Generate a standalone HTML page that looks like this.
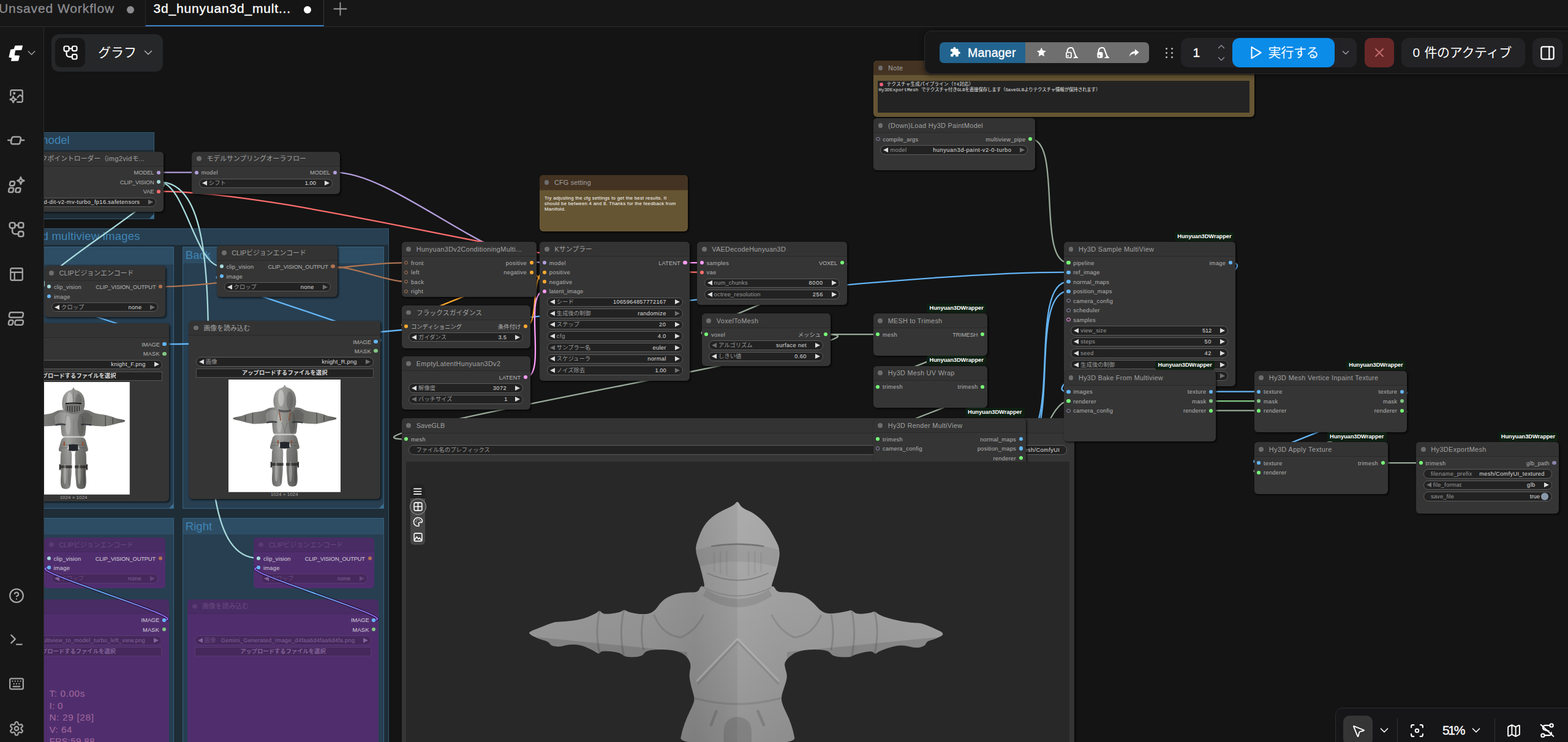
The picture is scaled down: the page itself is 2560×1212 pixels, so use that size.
<!DOCTYPE html><html lang="ja"><head><meta charset="utf-8"><title>ComfyUI - 3d_hunyuan3d_multiview</title><style>
html,body{margin:0;padding:0}
body{width:2560px;height:1212px;overflow:hidden;background:#141414;font-family:"Liberation Sans","Noto Sans CJK JP",sans-serif;position:relative}
.j{font-family:"Liberation Sans","Noto Sans CJK JP",sans-serif;white-space:nowrap}
.a{position:absolute}
.tb{-webkit-text-stroke:.35px currentColor}
.n{position:absolute;background:#353535;border-radius:6px;box-shadow:1.5px 1.5px 3px rgba(0,0,0,.6)}
.t{position:absolute;left:0;top:0;right:0;height:23.25px;background:#333;border-radius:6px 6px 0 0;box-shadow:0 1px 0 rgba(0,0,0,.24)}
.td{position:absolute;left:7.85px;top:7.85px;width:7.8px;height:7.8px;border-radius:50%;background:#6e6e6e}
.tt{position:absolute;left:24.25px;top:4.75px;height:14px;line-height:14px;font-size:10.85px;color:#a2a2a2;white-space:nowrap}
.d{position:absolute;width:6.2px;height:6.2px;margin:-3.1px;border-radius:50%}
.rg{box-sizing:border-box;border:1.7px solid;background:none!important}
.l{position:absolute;font-size:9.3px;line-height:12px;height:12px;color:#b4b4b4;white-space:nowrap}
.w{position:absolute;height:15.5px;border-radius:8px;background:#222;border:1px solid #5c5c5c;box-sizing:border-box}
.w .l{top:.75px}
.wl{left:15px;color:#9a9a9a}
.wv{right:26px;color:#dedede}
.al,.ar{position:absolute;top:2.75px;width:0;height:0;border-top:4px solid transparent;border-bottom:4px solid transparent}
.al{left:4px;border-right:8px solid #ddd}
.ar{right:4px;border-left:8px solid #ddd}
.dm.al{border-right-color:#707070}
.dm.ar{border-left-color:#707070}
.bt{position:absolute;height:15px;background:#222;border:1px solid #555;box-sizing:border-box;text-align:center;font-size:9.3px;line-height:13px;color:#dcdcdc;white-space:nowrap;font-weight:bold}
.bd{position:absolute;height:15px;line-height:15px;padding:0 4.25px;background:#0e2012;border-radius:3px;color:#fff;font-size:9.3px;font-weight:bold;white-space:nowrap}
.g{position:absolute;box-sizing:border-box;background:rgba(63,120,158,.25);border:1px solid rgba(63,120,158,.6)}
.gt{position:absolute;left:0;top:0;right:0;background:rgba(63,120,158,.25)}
.gl{position:absolute;left:3.75px;font-size:18.6px;line-height:22px;height:22px;color:#3f84b4;white-space:nowrap}
.gc{position:absolute;right:0;bottom:0;width:0;height:0;border-left:7.75px solid transparent;border-bottom:7.75px solid rgba(63,120,158,.85)}
.p{background:#502e6e;box-shadow:none}
.p .t{background:#492c64;box-shadow:0 1px 0 rgba(0,0,0,.12)}
.p .td{background:#5c3b73}
.p .tt{color:#6a4a80}
.p .l{color:#d6d0da}
.p .w{background:#46285c;border-color:#5a3a70}
.p .wl{color:#6b4a82}
.p .wv{color:#83639a}
.p .al{border-right-color:#83639a}
.p .ar{border-left-color:#83639a}
.p .dm.al{border-right-color:#64457b}
.p .dm.ar{border-left-color:#64457b}
.p .bt{background:#46285c;border-color:#573869;color:#83639a}
</style></head><body><svg width="0" height="0" style="position:absolute"><defs><linearGradient id="kg" gradientUnits="userSpaceOnUse" x1="0" y1="0" x2="1000" y2="0"><stop offset="0" stop-color="#5c5c5a"/><stop offset=".2" stop-color="#838380"/><stop offset=".36" stop-color="#6f6f6d"/><stop offset=".45" stop-color="#a2a29f"/><stop offset=".6" stop-color="#6e6e6b"/><stop offset=".8" stop-color="#83837f"/><stop offset="1" stop-color="#525250"/></linearGradient><linearGradient id="kv" gradientUnits="userSpaceOnUse" x1="0" y1="0" x2="0" y2="1000"><stop offset="0" stop-color="#fff" stop-opacity=".12"/><stop offset=".5" stop-color="#000" stop-opacity="0"/><stop offset="1" stop-color="#000" stop-opacity=".22"/></linearGradient></defs></svg><div class="g" style="left:-60px;top:216.25px;width:311.75px;height:141.75px"><div class="gt" style="height:27.5px"></div><i class="gc"></i></div><span class="gl a" style="left:0;top:218.2px;width:113.75px;text-align:right">Load model</span><div class="g" style="left:-60px;top:372.5px;width:694.9px;height:900px"><div class="gt" style="height:26.5px"></div></div><span class="gl a" style="left:0;top:374.5px;width:228.75px;text-align:right"><span style="letter-spacing:.17px">Load multiview images</span></span><div class="g" style="left:-60px;top:403px;width:344.25px;height:427.5px"><div class="gt" style="height:27.5px"></div><i class="gc"></i></div><div class="g" style="left:298px;top:403px;width:328.75px;height:427.5px"><div class="gt" style="height:25.75px"></div><span class="gl" style="top:2px">Back</span><i class="gc"></i></div><div class="g" style="left:-60px;top:846.25px;width:344.25px;height:420px"><div class="gt" style="height:26px"></div></div><div class="g" style="left:298px;top:846.25px;width:328.75px;height:420px"><div class="gt" style="height:26px"></div><span class="gl" style="top:2px">Right</span></div><svg class="a" style="left:0;top:0" width="2560" height="1212" fill="none" stroke-linecap="round"><path d="M259.25 281.6C274.69 281.6 305.56 281.6 321 281.6" stroke="#B39DDB" stroke-width="2.3"/><path d="M546.75 281.6C639.92 281.6 795.83 429.1 889 429.1" stroke="#B39DDB" stroke-width="2.3"/><path d="M259.25 312.6C483.32 312.6 921.68 444.6 1145.75 444.6" stroke="#FF6E6E" stroke-width="2.3"/><path d="M259.25 297.1C302.28 297.1 318.72 435.35 361.75 435.35" stroke="#A8DADC" stroke-width="2.3"/><path d="M259.25 297.1C321.18 297.1 18.32 468.35 80.25 468.35" stroke="#A8DADC" stroke-width="2.3"/><path d="M259.25 297.1C418.24 297.1 263.16 911.85 422.15 911.85" stroke="#A8DADC" stroke-width="2.3"/><path d="M262.25 468.35C362.98 468.35 562.52 429.1 663.25 429.1" stroke="#AD7452" stroke-width="2.3"/><path d="M543.5 435.35C574.07 435.35 632.68 460.1 663.25 460.1" stroke="#AD7452" stroke-width="2.3"/><path d="M268.5 562.1C319.47 562.1 29.28 483.85 80.25 483.85" stroke="#64B5F6" stroke-width="2.3"/><path d="M268.5 562.1C638.67 562.1 1374.33 444.6 1744.5 444.6" stroke="#64B5F6" stroke-width="2.3"/><path d="M613.5 557.85C681.89 557.85 293.36 450.85 361.75 450.85" stroke="#64B5F6" stroke-width="2.3"/><path d="M867.75 429.1C925.08 429.1 605.92 532.85 663.25 532.85" stroke="#FFA931" stroke-width="2.3"/><path d="M858 532.85C881.38 532.85 865.62 444.6 889 444.6" stroke="#FFA931" stroke-width="2.3"/><path d="M867.75 444.6C874.33 444.6 882.42 460.1 889 460.1" stroke="#FFA931" stroke-width="2.3"/><path d="M858 616.1C893.97 616.1 853.03 475.6 889 475.6" stroke="#FF9CF9" stroke-width="2.3"/><path d="M1118.5 429.1C1125.31 429.1 1138.94 429.1 1145.75 429.1" stroke="#FF9CF9" stroke-width="2.3"/><path d="M1374.75 429.1C1437.38 429.1 1090.62 546.1 1153.25 546.1" stroke="#99AA99" stroke-width="2.3"/><path d="M1347.75 546.1C1369.12 546.1 1411.88 546.1 1433.25 546.1" stroke="#99AA99" stroke-width="2.3"/><path d="M1347.75 546.1C1524.15 546.1 486.85 717.35 663.25 717.35" stroke="#99AA99" stroke-width="2.3"/><path d="M1604.25 546.1C1652.05 546.1 1385.45 631.6 1433.25 631.6" stroke="#99AA99" stroke-width="2.3"/><path d="M1604.25 631.6C1652.03 631.6 1385.47 717 1433.25 717" stroke="#99AA99" stroke-width="2.3"/><path d="M1682.25 227.1C1735.09 227.1 1691.66 429.1 1744.5 429.1" stroke="#99AA99" stroke-width="2.3"/><path d="M1666.75 717C1733.85 717 1677.4 460.1 1744.5 460.1" stroke="#64B5F6" stroke-width="2.3"/><path d="M1666.75 732.5C1733.85 732.5 1677.4 475.6 1744.5 475.6" stroke="#64B5F6" stroke-width="2.3"/><path d="M1666.75 748C1697.04 748 1714.21 655.1 1744.5 655.1" stroke="#99AA99" stroke-width="2.3"/><path d="M2009 429.1C2093.51 429.1 1659.99 639.6 1744.5 639.6" stroke="#64B5F6" stroke-width="2.3"/><path d="M1977.25 639.6C1996.75 639.6 2035.75 639.6 2055.25 639.6" stroke="#64B5F6" stroke-width="2.3"/><path d="M1977.25 655.1C1996.75 655.1 2035.75 655.1 2055.25 655.1" stroke="#81C784" stroke-width="2.3"/><path d="M1977.25 670.6C1996.75 670.6 2035.75 670.6 2055.25 670.6" stroke="#99AA99" stroke-width="2.3"/><path d="M2289 639.6C2354.29 639.6 1989.96 756.1 2055.25 756.1" stroke="#64B5F6" stroke-width="2.3"/><path d="M2289 670.6C2352.66 670.6 1991.59 771.6 2055.25 771.6" stroke="#99AA99" stroke-width="2.3"/><path d="M2257.75 756.1C2273.28 756.1 2304.32 756.1 2319.85 756.1" stroke="#99AA99" stroke-width="2.3"/></svg><div class="n p" style="left:72px;top:877.75px;width:197.5px;height:82.85px"><div class="t"><i class="td"></i><span class="tt"><span style="letter-spacing:-0.05px">CLIP</span><span class="j">ビジョンエンコード</span></span></div><i class="d" style="left:7.75px;top:34.1px;background:#A8DADC"></i><span class="l" style="left:15.5px;top:28.8px"><span style="letter-spacing:0.17px">clip_vision</span></span><i class="d" style="left:7.75px;top:49.6px;background:#64B5F6"></i><span class="l" style="left:15.5px;top:44.3px"><span style="letter-spacing:0.28px">image</span></span><i class="d" style="right:7.75px;top:34.1px;background:#AD7452"></i><span class="l" style="right:15.5px;top:28.8px"><span style="letter-spacing:-0.14px">CLIP_VISION_OUTPUT</span></span><div class="w" style="left:11.6px;top:59.5px;width:174.3px"><i class="al"></i><i class="ar dm"></i><span class="l wl"><span class="j">クロップ</span></span><span class="l wv"><span style="letter-spacing:0.32px">none</span></span></div></div><div class="n p" style="left:414.4px;top:877.75px;width:197px;height:82.85px"><div class="t"><i class="td"></i><span class="tt"><span style="letter-spacing:-0.05px">CLIP</span><span class="j">ビジョンエンコード</span></span></div><i class="d" style="left:7.75px;top:34.1px;background:#A8DADC"></i><span class="l" style="left:15.5px;top:28.8px"><span style="letter-spacing:0.17px">clip_vision</span></span><i class="d" style="left:7.75px;top:49.6px;background:#64B5F6"></i><span class="l" style="left:15.5px;top:44.3px"><span style="letter-spacing:0.28px">image</span></span><i class="d" style="right:7.75px;top:34.1px;background:#AD7452"></i><span class="l" style="right:15.5px;top:28.8px"><span style="letter-spacing:-0.14px">CLIP_VISION_OUTPUT</span></span><div class="w" style="left:11.6px;top:59.5px;width:173.8px"><i class="al"></i><i class="ar dm"></i><span class="l wl"><span class="j">クロップ</span></span><span class="l wv"><span style="letter-spacing:0.32px">none</span></span></div></div><div class="n p" style="left:-37.4px;top:978.7px;width:313px;height:300px"><div class="t"><i class="td"></i><span class="tt"><span class="j">画像を読み込む</span></span></div><i class="d" style="right:7.75px;top:34.1px;background:#64B5F6"></i><span class="l" style="right:15.5px;top:28.8px"><span style="letter-spacing:-0.09px">IMAGE</span></span><i class="d" style="right:7.75px;top:49.6px;background:#81C784"></i><span class="l" style="right:15.5px;top:44.3px"><span style="letter-spacing:0.17px">MASK</span></span><div class="w" style="left:11.6px;top:59.5px;width:289.8px"><i class="al"></i><i class="ar"></i><span class="l wl"><span class="j">画像</span></span><span class="l wv"><span style="letter-spacing:0.21px">multiview_to_model_turbo_left_view.png</span></span></div><div class="bt" style="left:11.6px;top:78.6px;width:289.8px"><span class="j">アップロードするファイルを選択</span></div></div><div class="n p" style="left:306px;top:978.7px;width:312px;height:300px"><div class="t"><i class="td"></i><span class="tt"><span class="j">画像を読み込む</span></span></div><i class="d" style="right:7.75px;top:34.1px;background:#64B5F6"></i><span class="l" style="right:15.5px;top:28.8px"><span style="letter-spacing:-0.09px">IMAGE</span></span><i class="d" style="right:7.75px;top:49.6px;background:#81C784"></i><span class="l" style="right:15.5px;top:44.3px"><span style="letter-spacing:0.17px">MASK</span></span><div class="w" style="left:11.6px;top:59.5px;width:288.8px"><i class="al"></i><i class="ar"></i><span class="l wl"><span class="j">画像</span></span><span class="l wv"><span style="letter-spacing:0.25px">Gemini_Generated_Image_d4faa6d4faa6d4fa.png</span></span></div><div class="bt" style="left:11.6px;top:78.6px;width:288.8px"><span class="j">アップロードするファイルを選択</span></div></div><svg class="a" style="left:0;top:0" width="2560" height="1212" fill="none" stroke-linecap="round"><defs><linearGradient id="pw1" gradientUnits="userSpaceOnUse" x1="60" y1="0" x2="280" y2="0"><stop offset="0" stop-color="#8f5fe0"/><stop offset=".5" stop-color="#64b5f6"/><stop offset="1" stop-color="#8f5fe0"/></linearGradient><linearGradient id="pw2" gradientUnits="userSpaceOnUse" x1="410" y1="0" x2="622" y2="0"><stop offset="0" stop-color="#8f5fe0"/><stop offset=".5" stop-color="#64b5f6"/><stop offset="1" stop-color="#8f5fe0"/></linearGradient></defs><path d="M267.85 1012.8C319.5 1012.8 28.1 927.35 79.75 927.35" stroke="rgba(30,10,50,.75)" stroke-width="4.2"/><path d="M267.85 1012.8C319.5 1012.8 28.1 927.35 79.75 927.35" stroke="url(#pw1)" stroke-width="2"/><path d="M610.25 1012.8C661.9 1012.8 370.5 927.35 422.15 927.35" stroke="rgba(30,10,50,.75)" stroke-width="4.2"/><path d="M610.25 1012.8C661.9 1012.8 370.5 927.35 422.15 927.35" stroke="url(#pw2)" stroke-width="2"/></svg><i class="d" style="left:79.75px;top:927.35px;background:#64B5F6"></i><i class="d" style="left:422.15px;top:927.35px;background:#64B5F6"></i><i class="d" style="left:267.85px;top:1012.8px;background:#64B5F6"></i><i class="d" style="left:610.25px;top:1012.8px;background:#64B5F6"></i><div class="n" style="left:23px;top:247.5px;width:244px;height:98.75px"><div class="t"><i class="td"></i><span class="tt" style="left:auto;right:31px"><span class="j">イメージのみのチェックポイントローダー（</span><span style="letter-spacing:0.48px">img2vid</span><span class="j">モ</span><span style="letter-spacing:0.11px">...</span></span></div><i class="d" style="right:7.75px;top:34.1px;background:#B39DDB"></i><span class="l" style="right:15.5px;top:28.8px">MODEL</span><i class="d" style="right:7.75px;top:49.6px;background:#A8DADC"></i><span class="l" style="right:15.5px;top:44.3px"><span style="letter-spacing:-0.17px">CLIP_VISION</span></span><i class="d" style="right:7.75px;top:65.1px;background:#FF6E6E"></i><span class="l" style="right:15.5px;top:59.8px"><span style="letter-spacing:-0.04px">VAE</span></span><div class="w" style="left:11.6px;top:75px;width:220.8px"><i class="al"></i><i class="ar dm"></i><span class="l wv"><span style="letter-spacing:0.36px">hunyuan3d-dit-v2-mv-turbo_fp16.safetensors</span></span></div></div><div class="n" style="left:313.25px;top:247.5px;width:241.25px;height:69.25px"><div class="t"><i class="td"></i><span class="tt"><span class="j">モデルサンプリングオーラフロー</span></span></div><i class="d" style="left:7.75px;top:34.1px;background:#B39DDB"></i><span class="l" style="left:15.5px;top:28.8px"><span style="letter-spacing:0.35px">model</span></span><i class="d" style="right:7.75px;top:34.1px;background:#B39DDB"></i><span class="l" style="right:15.5px;top:28.8px">MODEL</span><div class="w" style="left:11.6px;top:44px;width:218.05px"><i class="al"></i><i class="ar"></i><span class="l wl"><span class="j">シフト</span></span><span class="l wv">1.00</span></div></div><div class="n" style="left:-36.75px;top:528px;width:313px;height:291.25px"><div class="t"><i class="td"></i><span class="tt"><span class="j">画像を読み込む</span></span></div><i class="d" style="right:7.75px;top:34.1px;background:#64B5F6"></i><span class="l" style="right:15.5px;top:28.8px"><span style="letter-spacing:-0.09px">IMAGE</span></span><i class="d" style="right:7.75px;top:49.6px;background:#81C784"></i><span class="l" style="right:15.5px;top:44.3px"><span style="letter-spacing:0.17px">MASK</span></span><div class="w" style="left:11.6px;top:59.5px;width:289.8px"><i class="al"></i><i class="ar"></i><span class="l wl"><span class="j">画像</span></span><span class="l wv"><span style="letter-spacing:0.31px">knight_F.png</span></span></div><div class="bt" style="left:11.6px;top:78.6px;width:289.8px"><span class="j">アップロードするファイルを選択</span></div><svg class="a" style="left:64.75px;top:95.75px" width="183.75" height="183.75" viewBox="0 0 1000 1000"><rect width="1000" height="1000" fill="#fff"/><path d="M463.14 320.39Q463.14 258.44 436.64 252.14Q410.14 245.84 383.64 248.99Q357.14 252.14 335.94 264.74Q314.74 277.34 282.94 282.59Q251.14 287.84 232.59 289.94Q214.04 292.04 179.59 301.49Q145.14 310.94 133.48 317.24Q121.82 323.54 101.68 326.69Q81.54 329.84 59.28 334.56Q37.02 339.29 40.2 347.16Q43.38 355.04 67.76 359.24Q92.14 363.44 106.98 367.64Q121.82 371.84 133.48 374.99Q145.14 378.14 179.59 386.54Q214.04 394.94 232.59 393.89Q251.14 392.84 277.64 391.79Q304.14 390.74 330.64 387.59Q357.14 384.44 410.14 383.39Q463.14 382.34 463.14 320.39Z" fill="url(#kg)"/><path d="M463.14 320.39Q463.14 258.44 436.64 252.14Q410.14 245.84 383.64 248.99Q357.14 252.14 335.94 264.74Q314.74 277.34 282.94 282.59Q251.14 287.84 232.59 289.94Q214.04 292.04 179.59 301.49Q145.14 310.94 133.48 317.24Q121.82 323.54 101.68 326.69Q81.54 329.84 59.28 334.56Q37.02 339.29 40.2 347.16Q43.38 355.04 67.76 359.24Q92.14 363.44 106.98 367.64Q121.82 371.84 133.48 374.99Q145.14 378.14 179.59 386.54Q214.04 394.94 232.59 393.89Q251.14 392.84 277.64 391.79Q304.14 390.74 330.64 387.59Q357.14 384.44 410.14 383.39Q463.14 382.34 463.14 320.39Z" fill="url(#kv)"/><path d="M536.86 320.39Q536.86 382.34 589.86 383.39Q642.86 384.44 669.36 387.59Q695.86 390.74 722.36 391.79Q748.86 392.84 767.41 393.89Q785.96 394.94 820.41 386.54Q854.86 378.14 866.52 374.99Q878.18 371.84 893.02 367.64Q907.86 363.44 932.24 359.24Q956.62 355.04 959.8 347.16Q962.98 339.29 940.72 334.56Q918.46 329.84 898.32 326.69Q878.18 323.54 866.52 317.24Q854.86 310.94 820.41 301.49Q785.96 292.04 767.41 289.94Q748.86 287.84 717.06 282.59Q685.26 277.34 664.06 264.74Q642.86 252.14 616.36 248.99Q589.86 245.84 563.36 252.14Q536.86 258.44 536.86 320.39Z" fill="url(#kg)"/><path d="M536.86 320.39Q536.86 382.34 589.86 383.39Q642.86 384.44 669.36 387.59Q695.86 390.74 722.36 391.79Q748.86 392.84 767.41 393.89Q785.96 394.94 820.41 386.54Q854.86 378.14 866.52 374.99Q878.18 371.84 893.02 367.64Q907.86 363.44 932.24 359.24Q956.62 355.04 959.8 347.16Q962.98 339.29 940.72 334.56Q918.46 329.84 898.32 326.69Q878.18 323.54 866.52 317.24Q854.86 310.94 820.41 301.49Q785.96 292.04 767.41 289.94Q748.86 287.84 717.06 282.59Q685.26 277.34 664.06 264.74Q642.86 252.14 616.36 248.99Q589.86 245.84 563.36 252.14Q536.86 258.44 536.86 320.39Z" fill="url(#kv)"/><path d="M391.35 295.68Q399.3 263.13 449.65 259.98Q500 256.83 550.35 259.98Q600.7 263.13 608.65 295.68Q616.6 328.23 613.42 375.48Q610.24 422.73 604.94 462.11Q599.64 501.48 500 501.48Q400.36 501.48 395.06 462.11Q389.76 422.73 386.58 375.48Q383.4 328.23 391.35 295.68Z" fill="url(#kg)"/><path d="M391.35 295.68Q399.3 263.13 449.65 259.98Q500 256.83 550.35 259.98Q600.7 263.13 608.65 295.68Q616.6 328.23 613.42 375.48Q610.24 422.73 604.94 462.11Q599.64 501.48 500 501.48Q400.36 501.48 395.06 462.11Q389.76 422.73 386.58 375.48Q383.4 328.23 391.35 295.68Z" fill="url(#kv)"/><path d="M390.82 519.86Q402.48 479.96 500 479.96Q597.52 479.96 609.18 519.86Q620.84 559.76 629.32 592.31Q637.8 624.86 594.34 618.56Q550.88 612.26 548.76 583.91Q546.64 555.56 523.32 551.36Q500 547.16 476.68 551.36Q453.36 555.56 451.24 583.91Q449.12 612.26 405.66 618.56Q362.2 624.86 370.68 592.31Q379.16 559.76 390.82 519.86Z" fill="url(#kg)"/><path d="M390.82 519.86Q402.48 479.96 500 479.96Q597.52 479.96 609.18 519.86Q620.84 559.76 629.32 592.31Q637.8 624.86 594.34 618.56Q550.88 612.26 548.76 583.91Q546.64 555.56 523.32 551.36Q500 547.16 476.68 551.36Q453.36 555.56 451.24 583.91Q449.12 612.26 405.66 618.56Q362.2 624.86 370.68 592.31Q379.16 559.76 390.82 519.86Z" fill="url(#kv)"/><path d="M386.3 644.54Q387.36 594.14 437.18 594.14Q487 594.14 485.94 644.54Q484.88 694.94 483.82 726.44Q482.76 757.94 483.82 778.94Q484.88 799.94 480.64 841.94Q476.4 883.94 475.34 907.57Q474.28 931.19 463.68 941.17Q453.08 951.14 431.88 951.14Q410.68 951.14 400.08 941.17Q389.48 931.19 387.36 902.32Q385.24 873.44 388.42 836.69Q391.6 799.94 387.36 778.94Q383.12 757.94 384.18 726.44Q385.24 694.94 386.3 644.54Z" fill="url(#kg)"/><path d="M386.3 644.54Q387.36 594.14 437.18 594.14Q487 594.14 485.94 644.54Q484.88 694.94 483.82 726.44Q482.76 757.94 483.82 778.94Q484.88 799.94 480.64 841.94Q476.4 883.94 475.34 907.57Q474.28 931.19 463.68 941.17Q453.08 951.14 431.88 951.14Q410.68 951.14 400.08 941.17Q389.48 931.19 387.36 902.32Q385.24 873.44 388.42 836.69Q391.6 799.94 387.36 778.94Q383.12 757.94 384.18 726.44Q385.24 694.94 386.3 644.54Z" fill="url(#kv)"/><path d="M613.7 644.54Q614.76 694.94 615.82 726.44Q616.88 757.94 612.64 778.94Q608.4 799.94 611.58 836.69Q614.76 873.44 612.64 902.32Q610.52 931.19 599.92 941.17Q589.32 951.14 568.12 951.14Q546.92 951.14 536.32 941.17Q525.72 931.19 524.66 907.57Q523.6 883.94 519.36 841.94Q515.12 799.94 516.18 778.94Q517.24 757.94 516.18 726.44Q515.12 694.94 514.06 644.54Q513 594.14 562.82 594.14Q612.64 594.14 613.7 644.54Z" fill="url(#kg)"/><path d="M613.7 644.54Q614.76 694.94 615.82 726.44Q616.88 757.94 612.64 778.94Q608.4 799.94 611.58 836.69Q614.76 873.44 612.64 902.32Q610.52 931.19 599.92 941.17Q589.32 951.14 568.12 951.14Q546.92 951.14 536.32 941.17Q525.72 931.19 524.66 907.57Q523.6 883.94 519.36 841.94Q515.12 799.94 516.18 778.94Q517.24 757.94 516.18 726.44Q515.12 694.94 514.06 644.54Q513 594.14 562.82 594.14Q612.64 594.14 613.7 644.54Z" fill="url(#kv)"/><path d="M495.76 53.71Q500 37.96 504.24 53.71Q508.48 69.46 529.68 73.66Q550.88 77.86 568.9 96.76Q586.92 115.66 594.34 142.96Q601.76 170.26 600.7 197.56Q599.64 224.86 591.16 245.86Q582.68 266.86 573.14 279.46Q563.6 292.06 500 292.06Q436.4 292.06 426.86 279.46Q417.32 266.86 408.84 245.86Q400.36 224.86 399.3 197.56Q398.24 170.26 405.66 142.96Q413.08 115.66 431.1 96.76Q449.12 77.86 470.32 73.66Q491.52 69.46 495.76 53.71Z" fill="url(#kg)"/><path d="M495.76 53.71Q500 37.96 504.24 53.71Q508.48 69.46 529.68 73.66Q550.88 77.86 568.9 96.76Q586.92 115.66 594.34 142.96Q601.76 170.26 600.7 197.56Q599.64 224.86 591.16 245.86Q582.68 266.86 573.14 279.46Q563.6 292.06 500 292.06Q436.4 292.06 426.86 279.46Q417.32 266.86 408.84 245.86Q400.36 224.86 399.3 197.56Q398.24 170.26 405.66 142.96Q413.08 115.66 431.1 96.76Q449.12 77.86 470.32 73.66Q491.52 69.46 495.76 53.71Z" fill="url(#kv)"/><path d="M458 556q42 -10 84 0v52q-42 12 -84 0z" fill="#23262a"/><path d="M384 742h104v24h-104zM512 742h104v24h-104z" fill="#34322f" opacity=".9"/><path d="M374 730l12 4v44l-12 6zM626 730l-12 4v44l12 6z" fill="#2a2a2a"/><path d="M330 310q40 -60 100 -30l-10 90q-50 -20 -80 10z" fill="#fff" opacity=".16"/><path d="M670 310q-40 -60 -100 -30l10 90q50 -20 80 10z" fill="#000" opacity=".12"/><path d="M340 384q50 -14 92 -4M660 384q-50 -14 -92 -4" stroke="#2b2f36" stroke-width="14" fill="none" opacity=".8"/><path d="M215 296v94M785 296v94M150 318v54M850 318v54" stroke="#2e2e2e" stroke-width="9" opacity=".55"/><path d="M408 488h184" stroke="#e2e2e2" stroke-width="12" opacity=".75"/><path d="M392 560h62M546 560h62M390 585h62M548 585h62" stroke="#3a3a3a" stroke-width="5" opacity=".4"/><ellipse cx="468" cy="165" rx="26" ry="72" fill="#fff" opacity=".32"/><ellipse cx="545" cy="185" rx="30" ry="80" fill="#000" opacity=".16"/><ellipse cx="452" cy="385" rx="24" ry="85" fill="#fff" opacity=".22"/><ellipse cx="565" cy="385" rx="28" ry="100" fill="#000" opacity=".16"/><ellipse cx="424" cy="820" rx="13" ry="90" fill="#fff" opacity=".28"/><ellipse cx="552" cy="820" rx="13" ry="90" fill="#fff" opacity=".28"/><ellipse cx="462" cy="830" rx="12" ry="90" fill="#000" opacity=".15"/><ellipse cx="596" cy="830" rx="12" ry="90" fill="#000" opacity=".15"/><path d="M424 196q76 -12 152 0v62q-76 52 -152 0z" fill="#747472"/><path d="M430 192q70 -10 140 0" stroke="#151515" stroke-width="10" fill="none"/><path d="M448 212v44M468 212v50M488 212v54M512 212v54M532 212v50M552 212v44" stroke="#2a2a2a" stroke-width="7"/><path d="M500 60v130" stroke="#4a4a4a" stroke-width="4" opacity=".5"/><path d="M500 330v150" stroke="#5a5a5a" stroke-width="4" opacity=".5"/><path d="M418 530v34M582 530v34" stroke="#9a4f2e" stroke-width="12"/></svg><span class="l" style="left:116.75px;top:279px;width:80px;text-align:center;font-size:7.75px;color:#a8a8a8"><span style="letter-spacing:0.13px">1024 × 1024</span></span></div><div class="n" style="left:308.25px;top:523.75px;width:313px;height:291.25px"><div class="t"><i class="td"></i><span class="tt"><span class="j">画像を読み込む</span></span></div><i class="d" style="right:7.75px;top:34.1px;background:#64B5F6"></i><span class="l" style="right:15.5px;top:28.8px"><span style="letter-spacing:-0.09px">IMAGE</span></span><i class="d" style="right:7.75px;top:49.6px;background:#81C784"></i><span class="l" style="right:15.5px;top:44.3px"><span style="letter-spacing:0.17px">MASK</span></span><div class="w" style="left:11.6px;top:59.5px;width:289.8px"><i class="al"></i><i class="ar dm"></i><span class="l wl"><span class="j">画像</span></span><span class="l wv"><span style="letter-spacing:0.2px">knight_R.png</span></span></div><div class="bt" style="left:11.6px;top:78.6px;width:289.8px"><span class="j">アップロードするファイルを選択</span></div><svg class="a" style="left:64.25px;top:96.25px" width="183.75" height="183.75" viewBox="0 0 1000 1000"><rect width="1000" height="1000" fill="#fff"/><path d="M463.14 320.39Q463.14 258.44 436.64 252.14Q410.14 245.84 383.64 248.99Q357.14 252.14 335.94 264.74Q314.74 277.34 282.94 282.59Q251.14 287.84 232.59 289.94Q214.04 292.04 179.59 301.49Q145.14 310.94 133.48 317.24Q121.82 323.54 101.68 326.69Q81.54 329.84 59.28 334.56Q37.02 339.29 40.2 347.16Q43.38 355.04 67.76 359.24Q92.14 363.44 106.98 367.64Q121.82 371.84 133.48 374.99Q145.14 378.14 179.59 386.54Q214.04 394.94 232.59 393.89Q251.14 392.84 277.64 391.79Q304.14 390.74 330.64 387.59Q357.14 384.44 410.14 383.39Q463.14 382.34 463.14 320.39Z" fill="url(#kg)"/><path d="M463.14 320.39Q463.14 258.44 436.64 252.14Q410.14 245.84 383.64 248.99Q357.14 252.14 335.94 264.74Q314.74 277.34 282.94 282.59Q251.14 287.84 232.59 289.94Q214.04 292.04 179.59 301.49Q145.14 310.94 133.48 317.24Q121.82 323.54 101.68 326.69Q81.54 329.84 59.28 334.56Q37.02 339.29 40.2 347.16Q43.38 355.04 67.76 359.24Q92.14 363.44 106.98 367.64Q121.82 371.84 133.48 374.99Q145.14 378.14 179.59 386.54Q214.04 394.94 232.59 393.89Q251.14 392.84 277.64 391.79Q304.14 390.74 330.64 387.59Q357.14 384.44 410.14 383.39Q463.14 382.34 463.14 320.39Z" fill="url(#kv)"/><path d="M536.86 320.39Q536.86 382.34 589.86 383.39Q642.86 384.44 669.36 387.59Q695.86 390.74 722.36 391.79Q748.86 392.84 767.41 393.89Q785.96 394.94 820.41 386.54Q854.86 378.14 866.52 374.99Q878.18 371.84 893.02 367.64Q907.86 363.44 932.24 359.24Q956.62 355.04 959.8 347.16Q962.98 339.29 940.72 334.56Q918.46 329.84 898.32 326.69Q878.18 323.54 866.52 317.24Q854.86 310.94 820.41 301.49Q785.96 292.04 767.41 289.94Q748.86 287.84 717.06 282.59Q685.26 277.34 664.06 264.74Q642.86 252.14 616.36 248.99Q589.86 245.84 563.36 252.14Q536.86 258.44 536.86 320.39Z" fill="url(#kg)"/><path d="M536.86 320.39Q536.86 382.34 589.86 383.39Q642.86 384.44 669.36 387.59Q695.86 390.74 722.36 391.79Q748.86 392.84 767.41 393.89Q785.96 394.94 820.41 386.54Q854.86 378.14 866.52 374.99Q878.18 371.84 893.02 367.64Q907.86 363.44 932.24 359.24Q956.62 355.04 959.8 347.16Q962.98 339.29 940.72 334.56Q918.46 329.84 898.32 326.69Q878.18 323.54 866.52 317.24Q854.86 310.94 820.41 301.49Q785.96 292.04 767.41 289.94Q748.86 287.84 717.06 282.59Q685.26 277.34 664.06 264.74Q642.86 252.14 616.36 248.99Q589.86 245.84 563.36 252.14Q536.86 258.44 536.86 320.39Z" fill="url(#kv)"/><path d="M391.35 295.68Q399.3 263.13 449.65 259.98Q500 256.83 550.35 259.98Q600.7 263.13 608.65 295.68Q616.6 328.23 613.42 375.48Q610.24 422.73 604.94 462.11Q599.64 501.48 500 501.48Q400.36 501.48 395.06 462.11Q389.76 422.73 386.58 375.48Q383.4 328.23 391.35 295.68Z" fill="url(#kg)"/><path d="M391.35 295.68Q399.3 263.13 449.65 259.98Q500 256.83 550.35 259.98Q600.7 263.13 608.65 295.68Q616.6 328.23 613.42 375.48Q610.24 422.73 604.94 462.11Q599.64 501.48 500 501.48Q400.36 501.48 395.06 462.11Q389.76 422.73 386.58 375.48Q383.4 328.23 391.35 295.68Z" fill="url(#kv)"/><path d="M390.82 519.86Q402.48 479.96 500 479.96Q597.52 479.96 609.18 519.86Q620.84 559.76 629.32 592.31Q637.8 624.86 594.34 618.56Q550.88 612.26 548.76 583.91Q546.64 555.56 523.32 551.36Q500 547.16 476.68 551.36Q453.36 555.56 451.24 583.91Q449.12 612.26 405.66 618.56Q362.2 624.86 370.68 592.31Q379.16 559.76 390.82 519.86Z" fill="url(#kg)"/><path d="M390.82 519.86Q402.48 479.96 500 479.96Q597.52 479.96 609.18 519.86Q620.84 559.76 629.32 592.31Q637.8 624.86 594.34 618.56Q550.88 612.26 548.76 583.91Q546.64 555.56 523.32 551.36Q500 547.16 476.68 551.36Q453.36 555.56 451.24 583.91Q449.12 612.26 405.66 618.56Q362.2 624.86 370.68 592.31Q379.16 559.76 390.82 519.86Z" fill="url(#kv)"/><path d="M386.3 644.54Q387.36 594.14 437.18 594.14Q487 594.14 485.94 644.54Q484.88 694.94 483.82 726.44Q482.76 757.94 483.82 778.94Q484.88 799.94 480.64 841.94Q476.4 883.94 475.34 907.57Q474.28 931.19 463.68 941.17Q453.08 951.14 431.88 951.14Q410.68 951.14 400.08 941.17Q389.48 931.19 387.36 902.32Q385.24 873.44 388.42 836.69Q391.6 799.94 387.36 778.94Q383.12 757.94 384.18 726.44Q385.24 694.94 386.3 644.54Z" fill="url(#kg)"/><path d="M386.3 644.54Q387.36 594.14 437.18 594.14Q487 594.14 485.94 644.54Q484.88 694.94 483.82 726.44Q482.76 757.94 483.82 778.94Q484.88 799.94 480.64 841.94Q476.4 883.94 475.34 907.57Q474.28 931.19 463.68 941.17Q453.08 951.14 431.88 951.14Q410.68 951.14 400.08 941.17Q389.48 931.19 387.36 902.32Q385.24 873.44 388.42 836.69Q391.6 799.94 387.36 778.94Q383.12 757.94 384.18 726.44Q385.24 694.94 386.3 644.54Z" fill="url(#kv)"/><path d="M613.7 644.54Q614.76 694.94 615.82 726.44Q616.88 757.94 612.64 778.94Q608.4 799.94 611.58 836.69Q614.76 873.44 612.64 902.32Q610.52 931.19 599.92 941.17Q589.32 951.14 568.12 951.14Q546.92 951.14 536.32 941.17Q525.72 931.19 524.66 907.57Q523.6 883.94 519.36 841.94Q515.12 799.94 516.18 778.94Q517.24 757.94 516.18 726.44Q515.12 694.94 514.06 644.54Q513 594.14 562.82 594.14Q612.64 594.14 613.7 644.54Z" fill="url(#kg)"/><path d="M613.7 644.54Q614.76 694.94 615.82 726.44Q616.88 757.94 612.64 778.94Q608.4 799.94 611.58 836.69Q614.76 873.44 612.64 902.32Q610.52 931.19 599.92 941.17Q589.32 951.14 568.12 951.14Q546.92 951.14 536.32 941.17Q525.72 931.19 524.66 907.57Q523.6 883.94 519.36 841.94Q515.12 799.94 516.18 778.94Q517.24 757.94 516.18 726.44Q515.12 694.94 514.06 644.54Q513 594.14 562.82 594.14Q612.64 594.14 613.7 644.54Z" fill="url(#kv)"/><path d="M495.76 53.71Q500 37.96 504.24 53.71Q508.48 69.46 529.68 73.66Q550.88 77.86 568.9 96.76Q586.92 115.66 594.34 142.96Q601.76 170.26 600.7 197.56Q599.64 224.86 591.16 245.86Q582.68 266.86 573.14 279.46Q563.6 292.06 500 292.06Q436.4 292.06 426.86 279.46Q417.32 266.86 408.84 245.86Q400.36 224.86 399.3 197.56Q398.24 170.26 405.66 142.96Q413.08 115.66 431.1 96.76Q449.12 77.86 470.32 73.66Q491.52 69.46 495.76 53.71Z" fill="url(#kg)"/><path d="M495.76 53.71Q500 37.96 504.24 53.71Q508.48 69.46 529.68 73.66Q550.88 77.86 568.9 96.76Q586.92 115.66 594.34 142.96Q601.76 170.26 600.7 197.56Q599.64 224.86 591.16 245.86Q582.68 266.86 573.14 279.46Q563.6 292.06 500 292.06Q436.4 292.06 426.86 279.46Q417.32 266.86 408.84 245.86Q400.36 224.86 399.3 197.56Q398.24 170.26 405.66 142.96Q413.08 115.66 431.1 96.76Q449.12 77.86 470.32 73.66Q491.52 69.46 495.76 53.71Z" fill="url(#kv)"/><path d="M458 556q42 -10 84 0v52q-42 12 -84 0z" fill="#23262a"/><path d="M384 742h104v24h-104zM512 742h104v24h-104z" fill="#34322f" opacity=".9"/><path d="M374 730l12 4v44l-12 6zM626 730l-12 4v44l12 6z" fill="#2a2a2a"/><path d="M330 310q40 -60 100 -30l-10 90q-50 -20 -80 10z" fill="#fff" opacity=".16"/><path d="M670 310q-40 -60 -100 -30l10 90q50 -20 80 10z" fill="#000" opacity=".12"/><path d="M340 384q50 -14 92 -4M660 384q-50 -14 -92 -4" stroke="#2b2f36" stroke-width="14" fill="none" opacity=".8"/><path d="M215 296v94M785 296v94M150 318v54M850 318v54" stroke="#2e2e2e" stroke-width="9" opacity=".55"/><path d="M408 488h184" stroke="#e2e2e2" stroke-width="12" opacity=".75"/><path d="M392 560h62M546 560h62M390 585h62M548 585h62" stroke="#3a3a3a" stroke-width="5" opacity=".4"/><ellipse cx="468" cy="165" rx="26" ry="72" fill="#fff" opacity=".32"/><ellipse cx="545" cy="185" rx="30" ry="80" fill="#000" opacity=".16"/><ellipse cx="452" cy="385" rx="24" ry="85" fill="#fff" opacity=".22"/><ellipse cx="565" cy="385" rx="28" ry="100" fill="#000" opacity=".16"/><ellipse cx="424" cy="820" rx="13" ry="90" fill="#fff" opacity=".28"/><ellipse cx="552" cy="820" rx="13" ry="90" fill="#fff" opacity=".28"/><ellipse cx="462" cy="830" rx="12" ry="90" fill="#000" opacity=".15"/><ellipse cx="596" cy="830" rx="12" ry="90" fill="#000" opacity=".15"/><path d="M452 290l12 74M548 290l-12 74" stroke="#8a4f33" stroke-width="9"/><path d="M470 380q30 40 30 100M530 380q-30 40 -30 100" stroke="#4a4a4a" stroke-width="4" fill="none" opacity=".5"/><path d="M444 262q56 22 112 0v22q-56 14 -112 0z" fill="#3c3c3c" opacity=".7"/><path d="M440 540v32M560 540v32" stroke="#8a4f33" stroke-width="10"/></svg><span class="l" style="left:116px;top:278.55px;width:80px;text-align:center;font-size:7.75px;color:#a8a8a8"><span style="letter-spacing:0.13px">1024 × 1024</span></span></div><div class="n" style="left:72.5px;top:434.25px;width:197.5px;height:83.25px"><div class="t"><i class="td"></i><span class="tt"><span style="letter-spacing:-0.05px">CLIP</span><span class="j">ビジョンエンコード</span></span></div><i class="d" style="left:7.75px;top:34.1px;background:#A8DADC"></i><span class="l" style="left:15.5px;top:28.8px"><span style="letter-spacing:0.17px">clip_vision</span></span><i class="d" style="left:7.75px;top:49.6px;background:#64B5F6"></i><span class="l" style="left:15.5px;top:44.3px"><span style="letter-spacing:0.28px">image</span></span><i class="d" style="right:7.75px;top:34.1px;background:#AD7452"></i><span class="l" style="right:15.5px;top:28.8px"><span style="letter-spacing:-0.14px">CLIP_VISION_OUTPUT</span></span><div class="w" style="left:11.6px;top:59.5px;width:174.3px"><i class="al"></i><i class="ar dm"></i><span class="l wl"><span class="j">クロップ</span></span><span class="l wv"><span style="letter-spacing:0.32px">none</span></span></div></div><div class="n" style="left:354px;top:401.25px;width:197.25px;height:83.75px"><div class="t"><i class="td"></i><span class="tt"><span style="letter-spacing:-0.05px">CLIP</span><span class="j">ビジョンエンコード</span></span></div><i class="d" style="left:7.75px;top:34.1px;background:#A8DADC"></i><span class="l" style="left:15.5px;top:28.8px"><span style="letter-spacing:0.17px">clip_vision</span></span><i class="d" style="left:7.75px;top:49.6px;background:#64B5F6"></i><span class="l" style="left:15.5px;top:44.3px"><span style="letter-spacing:0.28px">image</span></span><i class="d" style="right:7.75px;top:34.1px;background:#AD7452"></i><span class="l" style="right:15.5px;top:28.8px"><span style="letter-spacing:-0.14px">CLIP_VISION_OUTPUT</span></span><div class="w" style="left:11.6px;top:59.5px;width:174.05px"><i class="al"></i><i class="ar dm"></i><span class="l wl"><span class="j">クロップ</span></span><span class="l wv"><span style="letter-spacing:0.32px">none</span></span></div></div><div class="n" style="left:655.5px;top:395px;width:220px;height:90px"><div class="t"><i class="td"></i><span class="tt"><span style="letter-spacing:0.37px">Hunyuan3Dv2ConditioningMulti...</span></span></div><i class="d rg" style="left:7.75px;top:34.1px;border-color:#AD7452"></i><span class="l" style="left:15.5px;top:28.8px"><span style="letter-spacing:0.46px">front</span></span><i class="d rg" style="left:7.75px;top:49.6px;border-color:#AD7452"></i><span class="l" style="left:15.5px;top:44.3px"><span style="letter-spacing:0.36px">left</span></span><i class="d rg" style="left:7.75px;top:65.1px;border-color:#AD7452"></i><span class="l" style="left:15.5px;top:59.8px"><span style="letter-spacing:0.45px">back</span></span><i class="d rg" style="left:7.75px;top:80.6px;border-color:#AD7452"></i><span class="l" style="left:15.5px;top:75.3px"><span style="letter-spacing:0.41px">right</span></span><i class="d" style="right:7.75px;top:34.1px;background:#FFA931"></i><span class="l" style="right:15.5px;top:28.8px"><span style="letter-spacing:0.33px">positive</span></span><i class="d" style="right:7.75px;top:49.6px;background:#FFA931"></i><span class="l" style="right:15.5px;top:44.3px"><span style="letter-spacing:0.31px">negative</span></span></div><div class="n" style="left:881.25px;top:395px;width:245px;height:227px"><div class="t"><i class="td"></i><span class="tt"><span style="letter-spacing:0.05px">K</span><span class="j">サンプラー</span></span></div><i class="d" style="left:7.75px;top:34.1px;background:#B39DDB"></i><span class="l" style="left:15.5px;top:28.8px"><span style="letter-spacing:0.35px">model</span></span><i class="d" style="left:7.75px;top:49.6px;background:#FFA931"></i><span class="l" style="left:15.5px;top:44.3px"><span style="letter-spacing:0.33px">positive</span></span><i class="d" style="left:7.75px;top:65.1px;background:#FFA931"></i><span class="l" style="left:15.5px;top:59.8px"><span style="letter-spacing:0.31px">negative</span></span><i class="d" style="left:7.75px;top:80.6px;background:#FF9CF9"></i><span class="l" style="left:15.5px;top:75.3px"><span style="letter-spacing:0.2px">latent_image</span></span><i class="d" style="right:7.75px;top:34.1px;background:#FF9CF9"></i><span class="l" style="right:15.5px;top:28.8px"><span style="letter-spacing:0.09px">LATENT</span></span><div class="w" style="left:11.6px;top:90.5px;width:221.8px"><i class="al"></i><i class="ar"></i><span class="l wl"><span class="j">シード</span></span><span class="l wv"><span style="letter-spacing:0.24px">1065964857772167</span></span></div><div class="w" style="left:11.6px;top:109.1px;width:221.8px"><i class="al"></i><i class="ar dm"></i><span class="l wl"><span class="j">生成後の制御</span></span><span class="l wv"><span style="letter-spacing:0.32px">randomize</span></span></div><div class="w" style="left:11.6px;top:127.7px;width:221.8px"><i class="al"></i><i class="ar"></i><span class="l wl"><span class="j">ステップ</span></span><span class="l wv"><span style="letter-spacing:0.6px">20</span></span></div><div class="w" style="left:11.6px;top:146.3px;width:221.8px"><i class="al"></i><i class="ar"></i><span class="l wl"><span style="letter-spacing:0.59px">cfg</span></span><span class="l wv"><span style="letter-spacing:0.36px">4.0</span></span></div><div class="w" style="left:11.6px;top:164.9px;width:221.8px"><i class="al dm"></i><i class="ar"></i><span class="l wl"><span class="j">サンプラー名</span></span><span class="l wv"><span style="letter-spacing:0.28px">euler</span></span></div><div class="w" style="left:11.6px;top:183.5px;width:221.8px"><i class="al"></i><i class="ar"></i><span class="l wl"><span class="j">スケジューラ</span></span><span class="l wv"><span style="letter-spacing:0.32px">normal</span></span></div><div class="w" style="left:11.6px;top:202.1px;width:221.8px"><i class="al"></i><i class="ar dm"></i><span class="l wl"><span class="j">ノイズ除去</span></span><span class="l wv">1.00</span></div></div><div class="n" style="left:1138px;top:395px;width:244.5px;height:102.5px"><div class="t"><i class="td"></i><span class="tt"><span style="letter-spacing:0.29px">VAEDecodeHunyuan3D</span></span></div><i class="d" style="left:7.75px;top:34.1px;background:#FF9CF9"></i><span class="l" style="left:15.5px;top:28.8px"><span style="letter-spacing:0.28px">samples</span></span><i class="d" style="left:7.75px;top:49.6px;background:#FF6E6E"></i><span class="l" style="left:15.5px;top:44.3px"><span style="letter-spacing:0.28px">vae</span></span><i class="d" style="right:7.75px;top:34.1px;background:#77FF77"></i><span class="l" style="right:15.5px;top:28.8px"><span style="letter-spacing:-0.19px">VOXEL</span></span><div class="w" style="left:11.6px;top:59.5px;width:221.3px"><i class="al"></i><i class="ar"></i><span class="l wl"><span style="letter-spacing:0.25px">num_chunks</span></span><span class="l wv"><span style="letter-spacing:0.67px">8000</span></span></div><div class="w" style="left:11.6px;top:78.1px;width:221.3px"><i class="al"></i><i class="ar"></i><span class="l wl"><span style="letter-spacing:0.28px">octree_resolution</span></span><span class="l wv"><span style="letter-spacing:0.53px">256</span></span></div></div><div class="n" style="left:655.5px;top:498.75px;width:210.25px;height:70px"><div class="t"><i class="td"></i><span class="tt"><span class="j">フラックスガイダンス</span></span></div><i class="d" style="left:7.75px;top:34.1px;background:#FFA931"></i><span class="l" style="left:15.5px;top:28.8px"><span class="j">コンディショニング</span></span><i class="d" style="right:7.75px;top:34.1px;background:#FFA931"></i><span class="l" style="right:15.5px;top:28.8px"><span class="j">条件付け</span></span><div class="w" style="left:11.6px;top:44px;width:187.05px"><i class="al"></i><i class="ar"></i><span class="l wl"><span class="j">ガイダンス</span></span><span class="l wv"><span style="letter-spacing:0.27px">3.5</span></span></div></div><div class="n" style="left:655.5px;top:582px;width:210.25px;height:86.75px"><div class="t"><i class="td"></i><span class="tt"><span style="letter-spacing:0.36px">EmptyLatentHunyuan3Dv2</span></span></div><i class="d" style="right:7.75px;top:34.1px;background:#FF9CF9"></i><span class="l" style="right:15.5px;top:28.8px"><span style="letter-spacing:0.09px">LATENT</span></span><div class="w" style="left:11.6px;top:44px;width:187.05px"><i class="al"></i><i class="ar"></i><span class="l wl"><span class="j">解像度</span></span><span class="l wv"><span style="letter-spacing:0.42px">3072</span></span></div><div class="w" style="left:11.6px;top:62.6px;width:187.05px"><i class="al dm"></i><i class="ar"></i><span class="l wl"><span class="j">バッチサイズ</span></span><span class="l wv"><span style="letter-spacing:-1.39px">1</span></span></div></div><div class="n" style="left:1145.5px;top:512px;width:210px;height:86.25px"><div class="t"><i class="td"></i><span class="tt"><span style="letter-spacing:0.38px">VoxelToMesh</span></span></div><i class="d" style="left:7.75px;top:34.1px;background:#77FF77"></i><span class="l" style="left:15.5px;top:28.8px"><span style="letter-spacing:0.25px">voxel</span></span><i class="d" style="right:7.75px;top:34.1px;background:#77FF77"></i><span class="l" style="right:15.5px;top:28.8px"><span class="j">メッシュ</span></span><div class="w" style="left:11.6px;top:44px;width:186.8px"><i class="al dm"></i><i class="ar"></i><span class="l wl"><span class="j">アルゴリズム</span></span><span class="l wv"><span style="letter-spacing:0.35px">surface net</span></span></div><div class="w" style="left:11.6px;top:62.6px;width:186.8px"><i class="al"></i><i class="ar"></i><span class="l wl"><span class="j">しきい値</span></span><span class="l wv"><span style="letter-spacing:0.4px">0.60</span></span></div></div><div class="bd" style="left:1513.25px;top:495.5px"><span style="letter-spacing:-0.06px">Hunyuan3DWrapper</span></div><div class="n" style="left:1425.5px;top:512px;width:186.5px;height:69.25px"><div class="t"><i class="td"></i><span class="tt"><span style="letter-spacing:0.24px">MESH to Trimesh</span></span></div><i class="d" style="left:7.75px;top:34.1px;background:#77FF77"></i><span class="l" style="left:15.5px;top:28.8px"><span style="letter-spacing:0.31px">mesh</span></span><i class="d" style="right:7.75px;top:34.1px;background:#77FF77"></i><span class="l" style="right:15.5px;top:28.8px"><span style="letter-spacing:-0.07px">TRIMESH</span></span></div><div class="bd" style="left:1513.25px;top:581px"><span style="letter-spacing:-0.06px">Hunyuan3DWrapper</span></div><div class="n" style="left:1425.5px;top:597.5px;width:186.5px;height:68.75px"><div class="t"><i class="td"></i><span class="tt"><span style="letter-spacing:0.32px">Hy3D Mesh UV Wrap</span></span></div><i class="d" style="left:7.75px;top:34.1px;background:#77FF77"></i><span class="l" style="left:15.5px;top:28.8px"><span style="letter-spacing:0.35px">trimesh</span></span><i class="d" style="right:7.75px;top:34.1px;background:#77FF77"></i><span class="l" style="right:15.5px;top:28.8px"><span style="letter-spacing:0.35px">trimesh</span></span></div><div class="n" style="left:880.75px;top:286.25px;width:241.75px;height:91.25px;background:#665533"><div class="t" style="background:#443322"><i class="td"></i><span class="tt"><span style="letter-spacing:0.2px">CFG setting</span></span></div><span class="l" style="left:8.25px;top:32.3px;font-size:7.75px;line-height:9.5px;height:9.5px;color:#fff"><span style="letter-spacing:0.28px">Try adjusting the cfg settings to get the best results. It</span></span><span class="l" style="left:8.25px;top:41.7px;font-size:7.75px;line-height:9.5px;height:9.5px;color:#fff"><span style="letter-spacing:0.3px">should be between 4 and 8. Thanks for the feedback from</span></span><span class="l" style="left:8.25px;top:51.1px;font-size:7.75px;line-height:9.5px;height:9.5px;color:#fff"><span style="letter-spacing:0.35px">Manifold.</span></span></div><div class="n" style="left:1425.8px;top:98.9px;width:622.2px;height:92px;background:#665533"><div class="t" style="background:#443322"><i class="td"></i><span class="tt"><span style="letter-spacing:0.38px">Note</span></span></div><div class="a" style="left:7.2px;top:33.1px;width:607.2px;height:51.6px;background:#232323"></div><i class="a" style="left:10px;top:36.6px;width:6px;height:6px;border-radius:50%;background:#e8607a"></i><span class="l" style="left:22px;top:34.4px;font-size:7.5px;line-height:10px;height:10px;color:#e4e4e4"><span class="j" style="letter-spacing:0.04em">テクスチャ生成パイプライン（</span><span style="letter-spacing:0.39px">T4</span><span class="j" style="letter-spacing:0.04em">対応）</span></span><span class="l" style="left:8.6px;top:43.6px;font-size:7.5px;line-height:10px;height:10px;color:#e4e4e4;font-family:'Liberation Mono',monospace"><span style="letter-spacing:0.15px">Hy3DExportMesh </span><span class="j" style="letter-spacing:-0.022em">でテクスチャ付き</span><span style="letter-spacing:-0.2px">GLB</span><span class="j" style="letter-spacing:-0.023em">を直接保存します（</span><span style="letter-spacing:-0.11px">SaveGLB</span><span class="j" style="letter-spacing:-0.023em">よりテクスチャ情報が保持されます）</span></span></div><div class="n" style="left:1425.8px;top:193px;width:264.2px;height:84.9px"><div class="t"><i class="td"></i><span class="tt"><span style="letter-spacing:0.33px">(Down)Load Hy3D PaintModel</span></span></div><i class="d rg" style="left:7.75px;top:34.1px;border-color:#8a86aa"></i><span class="l" style="left:15.5px;top:28.8px"><span style="letter-spacing:0.23px">compile_args</span></span><i class="d" style="right:7.75px;top:34.1px;background:#77FF77"></i><span class="l" style="right:15.5px;top:28.8px"><span style="letter-spacing:0.31px">multiview_pipe</span></span><div class="w" style="left:11.6px;top:44px;width:241px"><i class="al"></i><i class="ar dm"></i><span class="l wl"><span style="letter-spacing:0.35px">model</span></span><span class="l wv"><span style="letter-spacing:0.52px">hunyuan3d-paint-v2-0-turbo</span></span></div></div><div class="bd" style="left:1918px;top:378.5px"><span style="letter-spacing:-0.06px">Hunyuan3DWrapper</span></div><div class="n" style="left:1736.75px;top:395px;width:280px;height:236.25px"><div class="t"><i class="td"></i><span class="tt"><span style="letter-spacing:0.34px">Hy3D Sample MultiView</span></span></div><i class="d" style="left:7.75px;top:34.1px;background:#77FF77"></i><span class="l" style="left:15.5px;top:28.8px"><span style="letter-spacing:0.3px">pipeline</span></span><i class="d" style="left:7.75px;top:49.6px;background:#64B5F6"></i><span class="l" style="left:15.5px;top:44.3px"><span style="letter-spacing:0.23px">ref_image</span></span><i class="d" style="left:7.75px;top:65.1px;background:#64B5F6"></i><span class="l" style="left:15.5px;top:59.8px"><span style="letter-spacing:0.23px">normal_maps</span></span><i class="d" style="left:7.75px;top:80.6px;background:#64B5F6"></i><span class="l" style="left:15.5px;top:75.3px"><span style="letter-spacing:0.26px">position_maps</span></span><i class="d rg" style="left:7.75px;top:96.1px;border-color:#8a86aa"></i><span class="l" style="left:15.5px;top:90.8px"><span style="letter-spacing:0.3px">camera_config</span></span><i class="d rg" style="left:7.75px;top:111.6px;border-color:#8a86aa"></i><span class="l" style="left:15.5px;top:106.3px"><span style="letter-spacing:0.35px">scheduler</span></span><i class="d rg" style="left:7.75px;top:127.1px;border-color:#FF9CF9"></i><span class="l" style="left:15.5px;top:121.8px"><span style="letter-spacing:0.28px">samples</span></span><i class="d" style="right:7.75px;top:34.1px;background:#64B5F6"></i><span class="l" style="right:15.5px;top:28.8px"><span style="letter-spacing:0.28px">image</span></span><div class="w" style="left:11.6px;top:137px;width:256.8px"><i class="al"></i><i class="ar"></i><span class="l wl"><span style="letter-spacing:0.21px">view_size</span></span><span class="l wv"><span style="letter-spacing:-0.14px">512</span></span></div><div class="w" style="left:11.6px;top:155.6px;width:256.8px"><i class="al"></i><i class="ar"></i><span class="l wl"><span style="letter-spacing:0.33px">steps</span></span><span class="l wv"><span style="letter-spacing:0.59px">50</span></span></div><div class="w" style="left:11.6px;top:174.2px;width:256.8px"><i class="al"></i><i class="ar"></i><span class="l wl"><span style="letter-spacing:0.32px">seed</span></span><span class="l wv"><span style="letter-spacing:0.67px">42</span></span></div><div class="w" style="left:11.6px;top:192.8px;width:256.8px"><i class="al"></i><i class="ar"></i><span class="l wl"><span class="j">生成後の制御</span></span><span class="l wv"><span style="letter-spacing:0.41px">fixed</span></span></div><div class="w" style="left:11.6px;top:211.4px;width:256.8px"><i class="al"></i><i class="ar dm"></i><span class="l wl"><span style="letter-spacing:0.26px">denoise_strength</span></span><span class="l wv">1.00</span></div></div><div class="n" style="left:655.5px;top:683.25px;width:1098.25px;height:600px;border-radius:6px 6px 0 0"><div class="t"><i class="td"></i><span class="tt">SaveGLB</span></div><i class="d" style="left:7.75px;top:34.1px;background:#77FF77"></i><span class="l" style="left:15.5px;top:28.8px"><span style="letter-spacing:0.31px">mesh</span></span><div class="w" style="left:11.6px;top:44px;width:1075.05px"><span class="l wl" style="left:11.3px"><span class="j">ファイル名のプレフィックス</span></span><span class="l wv" style="right:10.9px"><span style="letter-spacing:0.37px">mesh/ComfyUI</span></span></div></div><div class="bd" style="left:1886.25px;top:589px"><span style="letter-spacing:-0.06px">Hunyuan3DWrapper</span></div><div class="n" style="left:1736.75px;top:605.5px;width:248.25px;height:115.75px"><div class="t"><i class="td"></i><span class="tt"><span style="letter-spacing:0.3px">Hy3D Bake From Multiview</span></span></div><i class="d" style="left:7.75px;top:34.1px;background:#64B5F6"></i><span class="l" style="left:15.5px;top:28.8px"><span style="letter-spacing:0.28px">images</span></span><i class="d" style="left:7.75px;top:49.6px;background:#77FF77"></i><span class="l" style="left:15.5px;top:44.3px"><span style="letter-spacing:0.31px">renderer</span></span><i class="d rg" style="left:7.75px;top:65.1px;border-color:#8a86aa"></i><span class="l" style="left:15.5px;top:59.8px"><span style="letter-spacing:0.3px">camera_config</span></span><i class="d" style="right:7.75px;top:34.1px;background:#64B5F6"></i><span class="l" style="right:15.5px;top:28.8px"><span style="letter-spacing:0.33px">texture</span></span><i class="d" style="right:7.75px;top:49.6px;background:#81C784"></i><span class="l" style="right:15.5px;top:44.3px"><span style="letter-spacing:0.29px">mask</span></span><i class="d" style="right:7.75px;top:65.1px;background:#77FF77"></i><span class="l" style="right:15.5px;top:59.8px"><span style="letter-spacing:0.31px">renderer</span></span></div><div class="bd" style="left:1575.75px;top:666.4px"><span style="letter-spacing:-0.06px">Hunyuan3DWrapper</span></div><div class="n" style="left:1425.5px;top:682.9px;width:249px;height:70.7px;border-radius:6px 6px 0 0;overflow:hidden"><div class="t"><i class="td"></i><span class="tt"><span style="letter-spacing:0.32px">Hy3D Render MultiView</span></span></div><i class="d" style="left:7.75px;top:34.1px;background:#77FF77"></i><span class="l" style="left:15.5px;top:28.8px"><span style="letter-spacing:0.35px">trimesh</span></span><i class="d rg" style="left:7.75px;top:49.6px;border-color:#8a86aa"></i><span class="l" style="left:15.5px;top:44.3px"><span style="letter-spacing:0.3px">camera_config</span></span><i class="d" style="right:7.75px;top:34.1px;background:#64B5F6"></i><span class="l" style="right:15.5px;top:28.8px"><span style="letter-spacing:0.23px">normal_maps</span></span><i class="d" style="right:7.75px;top:49.6px;background:#64B5F6"></i><span class="l" style="right:15.5px;top:44.3px"><span style="letter-spacing:0.26px">position_maps</span></span><i class="d" style="right:7.75px;top:65.1px;background:#77FF77"></i><span class="l" style="right:15.5px;top:59.8px"><span style="letter-spacing:0.31px">renderer</span></span></div><div class="bd" style="left:2198px;top:589px"><span style="letter-spacing:-0.06px">Hunyuan3DWrapper</span></div><div class="n" style="left:2047.5px;top:605.5px;width:249.25px;height:100.75px"><div class="t"><i class="td"></i><span class="tt"><span style="letter-spacing:0.36px">Hy3D Mesh Vertice Inpaint Texture</span></span></div><i class="d" style="left:7.75px;top:34.1px;background:#64B5F6"></i><span class="l" style="left:15.5px;top:28.8px"><span style="letter-spacing:0.33px">texture</span></span><i class="d" style="left:7.75px;top:49.6px;background:#81C784"></i><span class="l" style="left:15.5px;top:44.3px"><span style="letter-spacing:0.29px">mask</span></span><i class="d" style="left:7.75px;top:65.1px;background:#77FF77"></i><span class="l" style="left:15.5px;top:59.8px"><span style="letter-spacing:0.31px">renderer</span></span><i class="d" style="right:7.75px;top:34.1px;background:#64B5F6"></i><span class="l" style="right:15.5px;top:28.8px"><span style="letter-spacing:0.33px">texture</span></span><i class="d" style="right:7.75px;top:49.6px;background:#81C784"></i><span class="l" style="right:15.5px;top:44.3px"><span style="letter-spacing:0.29px">mask</span></span><i class="d" style="right:7.75px;top:65.1px;background:#77FF77"></i><span class="l" style="right:15.5px;top:59.8px"><span style="letter-spacing:0.31px">renderer</span></span></div><div class="bd" style="left:2166.75px;top:705.5px"><span style="letter-spacing:-0.06px">Hunyuan3DWrapper</span></div><div class="n" style="left:2047.5px;top:722px;width:218px;height:85px"><div class="t"><i class="td"></i><span class="tt"><span style="letter-spacing:0.44px">Hy3D Apply Texture</span></span></div><i class="d" style="left:7.75px;top:34.1px;background:#64B5F6"></i><span class="l" style="left:15.5px;top:28.8px"><span style="letter-spacing:0.33px">texture</span></span><i class="d" style="left:7.75px;top:49.6px;background:#77FF77"></i><span class="l" style="left:15.5px;top:44.3px"><span style="letter-spacing:0.31px">renderer</span></span><i class="d" style="right:7.75px;top:34.1px;background:#77FF77"></i><span class="l" style="right:15.5px;top:28.8px"><span style="letter-spacing:0.35px">trimesh</span></span></div><div class="bd" style="left:2446.55px;top:705.5px"><span style="letter-spacing:-0.06px">Hunyuan3DWrapper</span></div><div class="n" style="left:2312.1px;top:722px;width:233.2px;height:116.6px"><div class="t"><i class="td"></i><span class="tt"><span style="letter-spacing:0.39px">Hy3DExportMesh</span></span></div><i class="d" style="left:7.75px;top:34.1px;background:#77FF77"></i><span class="l" style="left:15.5px;top:28.8px"><span style="letter-spacing:0.35px">trimesh</span></span><i class="d" style="right:7.75px;top:34.1px;background:#8a86aa"></i><span class="l" style="right:15.5px;top:28.8px"><span style="letter-spacing:0.26px">glb_path</span></span><div class="w" style="left:11.6px;top:44px;width:210px"><span class="l wl" style="left:11.3px"><span style="letter-spacing:0.29px">filename_prefix</span></span><span class="l wv" style="right:10.9px"><span style="letter-spacing:0.3px">mesh/ComfyUI_textured</span></span></div><div class="w" style="left:11.6px;top:62.6px;width:210px"><i class="al dm"></i><i class="ar"></i><span class="l wl"><span style="letter-spacing:0.27px">file_format</span></span><span class="l wv"><span style="letter-spacing:0.41px">glb</span></span></div><div class="w" style="left:11.6px;top:81.2px;width:210px"><span class="l wl" style="left:11.3px"><span style="letter-spacing:0.15px">save_file</span></span><span class="l wv" style="right:18.800px">true</span><i class="a" style="right:5.200px;top:1.050px;width:11.400px;height:11.400px;border-radius:50%;background:#8899aa"></i></div></div><div class="a" style="left:663.4px;top:753.6px;width:1082.35px;height:470px;background:#282828;overflow:hidden"><svg class="a" style="left:186.6px;top:46.4px;overflow:visible" width="710" height="420" viewBox="0 0 2089 1236"><defs><linearGradient id="bk" gradientUnits="userSpaceOnUse" x1="0" y1="0" x2="2089" y2="0"><stop offset="0" stop-color="#9a9a9a"/><stop offset=".3" stop-color="#959595"/><stop offset=".4" stop-color="#8e8e8e"/><stop offset=".497" stop-color="#9c9c9c"/><stop offset=".5" stop-color="#a6a6a6"/><stop offset=".6" stop-color="#a0a0a0"/><stop offset=".75" stop-color="#9d9d9d"/><stop offset="1" stop-color="#a2a2a2"/></linearGradient><linearGradient id="bs" x1="0" y1="0" x2="0" y2="1"><stop offset="0" stop-color="#fff" stop-opacity=".08"/><stop offset="1" stop-color="#000" stop-opacity=".12"/></linearGradient><clipPath id="kc"><path d="M1035 62Q1042 52 1052 70Q1062 88 1091 99Q1120 110 1152.5 140Q1185 170 1205 205Q1225 240 1236 265Q1247 290 1242 325Q1237 360 1226 395Q1215 430 1209 449Q1203 468 1209.5 465Q1216 462 1224 477Q1232 492 1251 492Q1270 492 1305 495Q1340 498 1370 516.5Q1400 535 1422.5 561.5Q1445 588 1467.5 593Q1490 598 1532.5 591Q1575 584 1582.5 580Q1590 576 1601 588Q1612 600 1648.5 596Q1685 592 1692.5 587Q1700 582 1711 592Q1722 602 1756 613.5Q1790 625 1835 632.5Q1880 640 1902.5 640Q1925 640 1955 652.5Q1985 665 2012.5 678.5Q2040 692 2020 703.5Q2000 715 1975 721.5Q1950 728 1947.5 739Q1945 750 1922.5 756Q1900 762 1870 754Q1840 746 1815 749Q1790 752 1756 764Q1722 776 1712 784Q1702 792 1695 782Q1688 772 1645 782Q1602 792 1593.5 799Q1585 806 1542.5 804Q1500 802 1490 787Q1480 772 1440 769Q1400 766 1365 771Q1330 776 1310 789Q1290 802 1278 817Q1266 832 1269 847Q1272 862 1277 881Q1282 900 1274 925Q1266 950 1258 975Q1250 1000 1255 1020Q1260 1040 1275 1070Q1290 1100 1300 1130Q1310 1160 1316 1192.5Q1322 1225 1042.5 1225Q763 1225 769 1192.5Q775 1160 787.5 1125Q800 1090 815 1060Q830 1030 833 1015Q836 1000 828 975Q820 950 814 920Q808 890 814 866Q820 842 810 822Q800 802 780 789Q760 776 725 771Q690 766 645 769Q600 772 592.5 787Q585 802 542.5 804Q500 806 490 794Q480 782 434 777Q388 772 382 782Q376 792 363 782Q350 772 320 759Q290 746 260 744Q230 742 210 749Q190 756 167.5 753Q145 750 140 740Q135 730 107.5 722.5Q80 715 59 703.5Q38 692 42 686Q46 680 73 670Q100 660 130 647.5Q160 635 180 635Q200 635 245 630Q290 625 325 610.5Q360 596 370 587Q380 578 388 589Q396 600 438 595Q480 590 488 582Q496 574 508 582Q520 590 555 595Q590 600 615 595Q640 590 660 560Q680 530 710 515Q740 500 775 496Q810 492 831 493Q852 494 859 477Q866 460 875 465Q884 470 882 455Q880 440 870 400Q860 360 849 325Q838 290 844 265Q850 240 865 205Q880 170 905 145Q930 120 965 103Q1000 86 1014 79Q1028 72 1035 62Z"/></clipPath></defs><path d="M1035 62Q1042 52 1052 70Q1062 88 1091 99Q1120 110 1152.5 140Q1185 170 1205 205Q1225 240 1236 265Q1247 290 1242 325Q1237 360 1226 395Q1215 430 1209 449Q1203 468 1209.5 465Q1216 462 1224 477Q1232 492 1251 492Q1270 492 1305 495Q1340 498 1370 516.5Q1400 535 1422.5 561.5Q1445 588 1467.5 593Q1490 598 1532.5 591Q1575 584 1582.5 580Q1590 576 1601 588Q1612 600 1648.5 596Q1685 592 1692.5 587Q1700 582 1711 592Q1722 602 1756 613.5Q1790 625 1835 632.5Q1880 640 1902.5 640Q1925 640 1955 652.5Q1985 665 2012.5 678.5Q2040 692 2020 703.5Q2000 715 1975 721.5Q1950 728 1947.5 739Q1945 750 1922.5 756Q1900 762 1870 754Q1840 746 1815 749Q1790 752 1756 764Q1722 776 1712 784Q1702 792 1695 782Q1688 772 1645 782Q1602 792 1593.5 799Q1585 806 1542.5 804Q1500 802 1490 787Q1480 772 1440 769Q1400 766 1365 771Q1330 776 1310 789Q1290 802 1278 817Q1266 832 1269 847Q1272 862 1277 881Q1282 900 1274 925Q1266 950 1258 975Q1250 1000 1255 1020Q1260 1040 1275 1070Q1290 1100 1300 1130Q1310 1160 1316 1192.5Q1322 1225 1042.5 1225Q763 1225 769 1192.5Q775 1160 787.5 1125Q800 1090 815 1060Q830 1030 833 1015Q836 1000 828 975Q820 950 814 920Q808 890 814 866Q820 842 810 822Q800 802 780 789Q760 776 725 771Q690 766 645 769Q600 772 592.5 787Q585 802 542.5 804Q500 806 490 794Q480 782 434 777Q388 772 382 782Q376 792 363 782Q350 772 320 759Q290 746 260 744Q230 742 210 749Q190 756 167.5 753Q145 750 140 740Q135 730 107.5 722.5Q80 715 59 703.5Q38 692 42 686Q46 680 73 670Q100 660 130 647.5Q160 635 180 635Q200 635 245 630Q290 625 325 610.5Q360 596 370 587Q380 578 388 589Q396 600 438 595Q480 590 488 582Q496 574 508 582Q520 590 555 595Q590 600 615 595Q640 590 660 560Q680 530 710 515Q740 500 775 496Q810 492 831 493Q852 494 859 477Q866 460 875 465Q884 470 882 455Q880 440 870 400Q860 360 849 325Q838 290 844 265Q850 240 865 205Q880 170 905 145Q930 120 965 103Q1000 86 1014 79Q1028 72 1035 62Z" fill="url(#bk)"/><g clip-path="url(#kc)"><path d="M40 705L800 780V840L40 760zM2040 705L1280 780V840L2040 760z" fill="#000" opacity=".13"/><path d="M842 290q200 -60 400 0l-12 80q-188 -50 -376 0z" fill="#000" opacity=".07"/><path d="M915 272q127 -22 254 0" stroke="#5e5e5e" stroke-width="7" fill="none" opacity=".8"/><path d="M895 400q148 70 296 0" stroke="#6a6a6a" stroke-width="5" fill="none" opacity=".7"/><path d="M880 470q162 80 324 0" stroke="#777" stroke-width="5" fill="none" opacity=".7"/><path d="M930 300v95M960 296v110M990 294v118M1095 294v118M1125 296v110M1155 300v95" stroke="#000" stroke-width="9" opacity=".06"/><path d="M890 480q152 90 304 0l14 30q-166 110 -332 0z" fill="#000" opacity=".10"/><path d="M1042 715L845 920M1042 715l200 205" stroke="#c4c4c4" stroke-width="8" fill="none" opacity=".55"/><path d="M1042 730L850 935M1042 730l198 205" stroke="#000" stroke-width="8" fill="none" opacity=".10"/><path d="M640 600q40 100 130 110q70 -30 110 -110M1445 600q-40 100 -130 110q-70 -30 -110 -110" stroke="#000" stroke-width="9" fill="none" opacity=".12"/><path d="M380 580q-25 100 0 210M496 576q-25 110 0 228M590 600q-18 90 0 170M1700 582q25 100 0 208M1590 578q25 110 0 226M1492 600q18 90 0 170" stroke="#000" stroke-width="9" fill="none" opacity=".14"/><path d="M830 1000q212 60 424 0" stroke="#000" stroke-width="10" fill="none" opacity=".10"/><path d="M975 1236v-70q0 -70 67 -75q67 5 67 75v70z" fill="#000" opacity=".12"/><path d="M940 1065l-25 65M1140 1065l28 65" stroke="#000" stroke-width="14" opacity=".14" stroke-linecap="round"/><rect width="2089" height="1236" fill="url(#bs)"/></g></svg><div class="a" style="left:6.6px;top:37px;width:24.5px;height:99.5px;border-radius:6px;background:#454545"></div><div class="a" style="left:6.6px;top:37px;width:24.5px;height:23.5px;border-radius:6px 6px 0 0;background:#222"></div><svg class="a" style="left:10.05px;top:40.05px" width="17.5" height="17.5" viewBox="0 0 24 24" fill="none" stroke="#fff" stroke-width="2.3" stroke-linecap="round" stroke-linejoin="round"><path d="M4 6h16M4 12h16M4 18h16"/></svg><i class="a" style="left:5.3px;top:60.5px;width:27px;height:27px;box-sizing:border-box;border-radius:50%;border:1.8px solid #a2a2a2;background:#444"></i><svg class="a" style="left:10.3px;top:65.5px" width="17" height="17" viewBox="0 0 24 24" fill="none" stroke="#fff" stroke-width="2.2" stroke-linecap="round" stroke-linejoin="round"><rect x="3" y="3" width="18" height="18" rx="3"/><path d="M3 12h18M12 3v18"/></svg><svg class="a" style="left:10.3px;top:90.8px" width="17" height="17" viewBox="0 0 24 24" fill="none" stroke="#fff" stroke-width="2.2" stroke-linecap="round" stroke-linejoin="round"><path d="M12 2a10 10 0 1 0 0 20a2.500 2.500 0 0 0 1.800-4.200a2.500 2.500 0 0 1 1.800-4.300H18a4 4 0 0 0 4-4C22 5.600 17.500 2 12 2z"/><path d="M7.500 11h.01M9.500 7h.01M14.500 6.500h.01M17.500 10h.01"/></svg><svg class="a" style="left:10.3px;top:115px" width="17" height="17" viewBox="0 0 24 24" fill="none" stroke="#fff" stroke-width="2.2" stroke-linecap="round" stroke-linejoin="round"><rect x="3" y="3" width="18" height="18" rx="3"/><path d="M3.500 19l5.500-8 4 5.500 2.500-3 5 6"/></svg></div><span class="a" style="left:80.4px;top:1124px;font-size:15.3px;line-height:18px;color:#a4699c;white-space:nowrap"><span style="letter-spacing:0.63px">T: 0.00s</span></span><span class="a" style="left:80.4px;top:1143.5px;font-size:15.3px;line-height:18px;color:#a4699c;white-space:nowrap"><span style="letter-spacing:0.3px">I: 0</span></span><span class="a" style="left:80.4px;top:1163px;font-size:15.3px;line-height:18px;color:#a4699c;white-space:nowrap"><span style="letter-spacing:0.7px">N: 29 [28]</span></span><span class="a" style="left:80.4px;top:1183px;font-size:15.3px;line-height:18px;color:#a4699c;white-space:nowrap"><span style="letter-spacing:0.51px">V: 64</span></span><span class="a" style="left:80.4px;top:1202px;font-size:15.3px;line-height:18px;color:#a4699c;white-space:nowrap"><span style="letter-spacing:0.24px">FPS:59.88</span></span><div class="a" style="left:0;top:0;width:2560px;height:43px;background:#171717;border-bottom:1px solid #2b2b2b"></div><div class="a" style="left:237px;top:0;width:289.5px;height:41px;background:#151515;border-left:1px solid #2a2a2a;border-right:1px solid #3a3a3a;border-bottom:2.5px solid #3d7fc4;box-sizing:content-box"></div><span class="a tb" style="left:-2px;top:0;font-size:21px;line-height:28px;color:#8b8b90;white-space:nowrap"><span style="letter-spacing:0.9px">Unsaved Workflow</span></span><i class="a" style="left:206.500px;top:10px;width:12px;height:12px;border-radius:50%;background:#8b8b90"></i><span class="a tb" style="left:250.5px;top:-.5px;font-size:21px;line-height:28px;color:#fff;white-space:nowrap"><span style="letter-spacing:0.83px">3d_hunyuan3d_mult...</span></span><i class="a" style="left:495.500px;top:10px;width:12px;height:12px;border-radius:50%;background:#fff"></i><svg class="a" style="left:541.5px;top:0.5px" width="27" height="27" viewBox="0 0 24 24" fill="none" stroke="#a0a0a0" stroke-width="1.6" stroke-linecap="round" stroke-linejoin="round"><path d="M12 3v18M3 12h18"/></svg><div class="a" style="left:0;top:44px;width:71px;height:1168px;background:#171717;border-right:1px solid #2c2c2c"></div><svg class="a" style="left:13.84px;top:73.76px" width="23.5" height="26.2" viewBox="190 285 570 635" fill="#fff" stroke="#fff" stroke-width="26" stroke-linejoin="round"><path d="M452 312L736 307 698 458 450 472 408 693 614 702 568 893 304 897 324 776 214 754 280 462 412 442z"/></svg><svg class="a" style="left:40.9px;top:75.7px" width="21" height="21" viewBox="0 0 24 24" fill="none" stroke="#8e8e8e" stroke-width="1.8" stroke-linecap="round" stroke-linejoin="round"><path d="m6 9 6 6 6-6"/></svg><svg class="a" style="left:13.7px;top:144px" width="26" height="26" viewBox="0 0 24 24" fill="none" stroke="#a3a3a3" stroke-width="2.1" stroke-linecap="round" stroke-linejoin="round"><path d="M3 11V5a2 2 0 0 1 2-2h14a2 2 0 0 1 2 2v14a2 2 0 0 1-2 2h-6"/><circle cx="8.5" cy="7.8" r=".9"/><path d="M21 13.5l-2.200-2.200a2 2 0 0 0-2.800 0L13.500 14"/><path d="M7 12.200l1.400 3.400 3.400 1.400-3.400 1.400L7 21.800l-1.400-3.400L2.200 17l3.400-1.400z"/></svg><svg class="a" style="left:12.2px;top:214.5px" width="29" height="29" viewBox="0 0 24 24" fill="none" stroke="#a3a3a3" stroke-width="2.1" stroke-linecap="round" stroke-linejoin="round"><path d="M1 11.5h4.5M17.5 11.5h5M8.8 7h7a2.4 2.4 0 0 1 2.3 3l-.9 4.4a3 3 0 0 1-2.9 2.4h-7a2.4 2.4 0 0 1-2.3-3l.9-4.4A3 3 0 0 1 8.800 7z"/></svg><svg class="a" style="left:11.7px;top:287px" width="30" height="30" viewBox="0 0 24 24" fill="none" stroke="#a3a3a3" stroke-width="2.1" stroke-linecap="round" stroke-linejoin="round"><path d="M5.500 7.500h2.800a1.300 1.300 0 0 1 1.300 1.600l-.500 2.500a1.900 1.900 0 0 1-1.800 1.500H4.500a1.300 1.300 0 0 1-1.300-1.600l.5-2.500A1.900 1.900 0 0 1 5.500 7.500zM4 16h2.800a1.300 1.300 0 0 1 1.300 1.600l-.5 2.500a1.900 1.900 0 0 1-1.800 1.500H3a1.300 1.300 0 0 1-1.300-1.600l.5-2.500A1.900 1.900 0 0 1 4 16zM13 16h2.800a1.300 1.300 0 0 1 1.300 1.600l-.5 2.500a1.900 1.900 0 0 1-1.800 1.500H12a1.300 1.300 0 0 1-1.300-1.600l.5-2.500A1.900 1.900 0 0 1 13 16z"/><path d="M17.500 2l1.300 3.200 3.200 1.300-3.200 1.300-1.300 3.200-1.300-3.200L13 6.500l3.200-1.300z"/></svg><svg class="a" style="left:11.7px;top:360px" width="30" height="30" viewBox="0 0 24 24" fill="none" stroke="#a3a3a3" stroke-width="2.1" stroke-linecap="round" stroke-linejoin="round"><rect x="3" y="3" width="7" height="7" rx="2.2"/><rect x="14.5" y="3" width="6.5" height="6.5" rx="2"/><rect x="14.5" y="14.5" width="6.5" height="6.5" rx="2"/><path d="M10 6.3h4.5M6.5 10v4.2a3.6 3.6 0 0 0 3.6 3.6h4.4"/></svg><svg class="a" style="left:13.7px;top:434.5px" width="26" height="26" viewBox="0 0 24 24" fill="none" stroke="#a3a3a3" stroke-width="2.1" stroke-linecap="round" stroke-linejoin="round"><rect x="3" y="3" width="18" height="18" rx="2"/><path d="M3 9h18M9 21V9"/></svg><svg class="a" style="left:12.2px;top:505.5px" width="29" height="29" viewBox="0 0 24 24" fill="none" stroke="#a3a3a3" stroke-width="2.1" stroke-linecap="round" stroke-linejoin="round"><path d="M5.2 3.5h14.3a2 2 0 0 1 2 2.4l-.5 2.6a2.4 2.4 0 0 1-2.3 1.9H4.4a2 2 0 0 1-2-2.4l.5-2.6a2.4 2.4 0 0 1 2.3-1.9z"/><path d="M4.3 14h1.9a1.6 1.6 0 0 1 1.6 2l-.6 2.7a2.3 2.3 0 0 1-2.2 1.8H3.2a1.6 1.6 0 0 1-1.6-2l.6-2.7A2.3 2.3 0 0 1 4.3 14z"/><path d="M13 14h6.7a1.8 1.8 0 0 1 1.8 2.2l-.5 2.5a2.3 2.3 0 0 1-2.3 1.8H12a1.8 1.8 0 0 1-1.8-2.2l.5-2.5A2.3 2.3 0 0 1 13 14z"/></svg><svg class="a" style="left:13.7px;top:960px" width="26" height="26" viewBox="0 0 24 24" fill="none" stroke="#a3a3a3" stroke-width="2.1" stroke-linecap="round" stroke-linejoin="round"><circle cx="12" cy="12" r="10"/><path d="M9.09 9a3 3 0 0 1 5.83 1c0 2-3 3-3 3"/><path d="M12 17h.01"/></svg><svg class="a" style="left:13.7px;top:1032px" width="26" height="26" viewBox="0 0 24 24" fill="none" stroke="#a3a3a3" stroke-width="2.1" stroke-linecap="round" stroke-linejoin="round"><path d="m4 17 6-6-6-6"/><path d="M12 19h8"/></svg><svg class="a" style="left:13.7px;top:1104px" width="26" height="26" viewBox="0 0 24 24" fill="none" stroke="#a3a3a3" stroke-width="2.1" stroke-linecap="round" stroke-linejoin="round"><rect x="2" y="4" width="20" height="16" rx="2"/><path d="M6 8h.01M10 8h.01M14 8h.01M18 8h.01M8 12h.01M12 12h.01M16 12h.01M7 16h10"/></svg><svg class="a" style="left:13.7px;top:1177px" width="26" height="26" viewBox="0 0 24 24" fill="none" stroke="#a3a3a3" stroke-width="2.1" stroke-linecap="round" stroke-linejoin="round"><path d="M12.22 2h-.44a2 2 0 0 0-2 2v.18a2 2 0 0 1-1 1.73l-.43.25a2 2 0 0 1-2 0l-.15-.08a2 2 0 0 0-2.73.73l-.22.38a2 2 0 0 0 .73 2.73l.15.1a2 2 0 0 1 1 1.72v.51a2 2 0 0 1-1 1.74l-.15.09a2 2 0 0 0-.73 2.73l.22.38a2 2 0 0 0 2.73.73l.15-.08a2 2 0 0 1 2 0l.43.25a2 2 0 0 1 1 1.73V20a2 2 0 0 0 2 2h.44a2 2 0 0 0 2-2v-.18a2 2 0 0 1 1-1.73l.43-.25a2 2 0 0 1 2 0l.15.08a2 2 0 0 0 2.73-.73l.22-.39a2 2 0 0 0-.73-2.73l-.15-.08a2 2 0 0 1-1-1.74v-.5a2 2 0 0 1 1-1.74l.15-.09a2 2 0 0 0 .73-2.73l-.22-.38a2 2 0 0 0-2.73-.73l-.15.08a2 2 0 0 1-2 0l-.43-.25a2 2 0 0 1-1-1.73V4a2 2 0 0 0-2-2z"/><circle cx="12" cy="12" r="3"/></svg><div class="a" style="left:84.25px;top:56.25px;width:181.75px;height:60.25px;border-radius:12px;background:#262729"></div><div class="a" style="left:90px;top:62px;width:48.75px;height:48px;border-radius:10px;background:#171718"></div><svg class="a" style="left:100.5px;top:72.3px" width="28" height="28" viewBox="0 0 24 24" fill="none" stroke="#fff" stroke-width="1.9" stroke-linecap="round" stroke-linejoin="round"><rect x="3" y="3" width="7" height="7" rx="2.2"/><rect x="14.5" y="3" width="6.5" height="6.5" rx="2"/><rect x="14.5" y="14.5" width="6.5" height="6.5" rx="2"/><path d="M10 6.3h4.5M6.5 10v4.2a3.6 3.6 0 0 0 3.6 3.6h4.4"/></svg><span class="a" style="left:160px;top:72px;font-size:21px;line-height:28px;color:#fff;white-space:nowrap"><span class="j">グラフ</span></span><svg class="a" style="left:231px;top:75px" width="22" height="22" viewBox="0 0 24 24" fill="none" stroke="#b5b5b5" stroke-width="1.7" stroke-linecap="round" stroke-linejoin="round"><path d="m6 9 6 6 6-6"/></svg><div class="a" style="left:1509px;top:50.4px;width:1100px;height:70.3px;border-radius:12px;background:#171718;border:1px solid #2c2c30;box-sizing:border-box;box-shadow:0 2px 8px rgba(0,0,0,.5)"></div><div class="a" style="left:1534px;top:69px;width:140px;height:34.4px;border-radius:7px 0 0 7px;background:#22648f"></div><div class="a" style="left:1674px;top:69px;width:202px;height:34.4px;border-radius:0 7px 7px 0;background:#6f6f6f"></div><svg class="a" style="left:1549.5px;top:76px" width="19" height="18" viewBox="0 0 24 24" fill="#fff"><path d="M20.5 11H19V7a2 2 0 0 0-2-2h-4V3.5a2.5 2.5 0 0 0-5 0V5H4a2 2 0 0 0-2 2v3.8h1.5a2.700 2.700 0 0 1 0 5.400H2V20a2 2 0 0 0 2 2h3.800v-1.500a2.700 2.700 0 0 1 5.400 0V22H17a2 2 0 0 0 2-2v-4h1.500a2.500 2.500 0 0 0 0-5z"/></svg><span class="a tb" style="left:1580px;top:72px;font-size:19.5px;line-height:28px;color:#fff;white-space:nowrap"><span style="letter-spacing:0.25px">Manager</span></span><svg class="a" style="left:1691.5px;top:76.800px" width="16.600" height="16.500" viewBox="0 0 24 24" fill="#fff"><path d="M12 1l3.300 7.100 7.700.9-5.700 5.300 1.500 7.700L12 18.200 5.200 22l1.500-7.700L1 9l7.700-.9z"/></svg><svg class="a" style="left:1740px;top:76.500px" width="20.500" height="18.200" viewBox="0 0 20.500 18.200"><path d="M2.500 8V6.500A5.500 5.500 0 0 1 8 1h1.200a3 3 0 0 1 2.800 2L16.800 16" fill="none" stroke="#fff" stroke-width="2.100" stroke-linecap="round"/><path d="M12.500 17.500h7.200l-2.400-2.900z" fill="#fff" stroke="#fff" stroke-width="1" stroke-linejoin="round"/><rect x=".9" y="8.600" width="8" height="8.700" rx="1.700" fill="none" stroke="#fff" stroke-width="1.800"/><circle cx="3.800" cy="14.200" r="1.200" fill="#fff"/></svg><svg class="a" style="left:1790.500px;top:76.500px" width="20.500" height="18.200" viewBox="0 0 20.500 18.200"><path d="M2.500 8V6.500A5.500 5.500 0 0 1 8 1h1.200a3 3 0 0 1 2.800 2L16.800 16" fill="none" stroke="#fff" stroke-width="2.100" stroke-linecap="round"/><path d="M12.500 17.500h7.200l-2.400-2.900z" fill="#fff" stroke="#fff" stroke-width="1" stroke-linejoin="round"/><rect x=".4" y="8" width="9" height="9.800" rx="2" fill="#fff"/><circle cx="3.800" cy="14.200" r="1.300" fill="#707070"/></svg><svg class="a" style="left:1842.500px;top:79.500px" width="17" height="13" viewBox="0 0 24 18.500" fill="#fff"><path d="M14 .5l9.500 7.500-9.500 7.500v-4.700C8 10.800 4 12.800 1 18c.8-7.500 5.500-12 13-12.700z"/></svg><i class="a" style="left:1903.2px;top:78.2px;width:2.600px;height:2.600px;border-radius:50%;background:#b0b0b0"></i><i class="a" style="left:1903.2px;top:85.2px;width:2.600px;height:2.600px;border-radius:50%;background:#b0b0b0"></i><i class="a" style="left:1903.2px;top:92.2px;width:2.600px;height:2.600px;border-radius:50%;background:#b0b0b0"></i><i class="a" style="left:1912.2px;top:78.2px;width:2.600px;height:2.600px;border-radius:50%;background:#b0b0b0"></i><i class="a" style="left:1912.2px;top:85.2px;width:2.600px;height:2.600px;border-radius:50%;background:#b0b0b0"></i><i class="a" style="left:1912.2px;top:92.2px;width:2.600px;height:2.600px;border-radius:50%;background:#b0b0b0"></i><div class="a" style="left:1927.7px;top:62px;width:287.3px;height:48.4px;border-radius:12px;background:#232326"></div><span class="a tb" style="left:1947.5px;top:71.500px;font-size:21px;line-height:28px;color:#fff">1</span><svg class="a" style="left:1986.5px;top:69px" width="14" height="34" viewBox="0 0 14 34" fill="none" stroke="#8a8a8e" stroke-width="1.600" stroke-linecap="round" stroke-linejoin="round"><path d="M2.500 9.500 7 5l4.500 4.500M2.500 25 7 29.500l4.500-4.500"/></svg><div class="a" style="left:2012px;top:62px;width:167px;height:48.4px;border-radius:12px;background:#0b8ce9"></div><svg class="a" style="left:2036.5px;top:73.2px" width="26" height="26" viewBox="0 0 24 24" fill="none" stroke="#fff" stroke-width="1.9" stroke-linecap="round" stroke-linejoin="round"><path d="M6 3.500 20 12 6 20.500z"/></svg><span class="a" style="left:2070.6px;top:72px;font-size:21px;line-height:28px;color:#fff;white-space:nowrap"><span class="j" style="letter-spacing:-0.017em">実行する</span></span><svg class="a" style="left:2187.5px;top:77px" width="18" height="18" viewBox="0 0 24 24" fill="none" stroke="#a0a0a4" stroke-width="2" stroke-linecap="round" stroke-linejoin="round"><path d="m6 9 6 6 6-6"/></svg><div class="a" style="left:2227.5px;top:62px;width:48px;height:48.4px;border-radius:10px;background:#682828"></div><svg class="a" style="left:2239.5px;top:74.2px" width="24" height="24" viewBox="0 0 24 24" fill="none" stroke="#c46d6d" stroke-width="1.9" stroke-linecap="round" stroke-linejoin="round"><path d="M18 6 6 18M6 6l12 12"/></svg><div class="a" style="left:2288px;top:62px;width:201.6px;height:48.4px;border-radius:12px;background:#232326"></div><span class="a" style="left:2306.6px;top:72px;font-size:21px;line-height:28px;color:#fff;white-space:nowrap"><span style="letter-spacing:0.67px">0 </span><span class="j" style="letter-spacing:-0.016em">件のアクティブ</span></span><div class="a" style="left:2502px;top:62px;width:48.5px;height:48.4px;border-radius:12px;background:#232326"></div><svg class="a" style="left:2513px;top:72.7px" width="27" height="27" viewBox="0 0 24 24" fill="none" stroke="#fff" stroke-width="2" stroke-linecap="round" stroke-linejoin="round"><rect x="3" y="3" width="18" height="18" rx="2.500"/><path d="M14.500 3v18"/></svg><div class="a" style="left:2180px;top:1155.7px;width:420px;height:80px;border-radius:12px;background:#161618;border:1px solid #2c2c30;box-sizing:border-box"></div><div class="a" style="left:2193px;top:1168.800px;width:48px;height:48px;border-radius:10px;background:#353535"></div><svg class="a" style="left:2205.5px;top:1181.5px" width="24" height="24" viewBox="0 0 24 24" fill="none" stroke="#fff" stroke-width="1.9" stroke-linecap="round" stroke-linejoin="round"><path d="M4.037 4.688a.495.495 0 0 1 .651-.651l16 6.500a.5.5 0 0 1-.063.947l-6.124 1.580a2 2 0 0 0-1.438 1.435l-1.579 6.126a.5.5 0 0 1-.947.063z"/></svg><svg class="a" style="left:2248.6px;top:1182px" width="22" height="22" viewBox="0 0 24 24" fill="none" stroke="#fff" stroke-width="1.8" stroke-linecap="round" stroke-linejoin="round"><path d="m6 9 6 6 6-6"/></svg><div class="a" style="left:2281px;top:1172.800px;width:1px;height:40px;background:#333336"></div><svg class="a" style="left:2300.5px;top:1180.5px" width="25" height="25" viewBox="0 0 24 24" fill="none" stroke="#fff" stroke-width="2" stroke-linecap="round" stroke-linejoin="round"><path d="M3 7V5a2 2 0 0 1 2-2h2M17 3h2a2 2 0 0 1 2 2v2M21 17v2a2 2 0 0 1-2 2h-2M7 21H5a2 2 0 0 1-2-2v-2"/><circle cx="12" cy="12" r="2.6"/></svg><span class="a tb" style="left:2355px;top:1179px;font-size:21px;line-height:28px;color:#fff;white-space:nowrap"><span style="letter-spacing:-2.34px">51%</span></span><svg class="a" style="left:2399px;top:1182px" width="22" height="22" viewBox="0 0 24 24" fill="none" stroke="#fff" stroke-width="1.8" stroke-linecap="round" stroke-linejoin="round"><path d="m6 9 6 6 6-6"/></svg><div class="a" style="left:2440px;top:1172.800px;width:1px;height:40px;background:#333336"></div><svg class="a" style="left:2459.1px;top:1180.5px" width="25" height="25" viewBox="0 0 24 24" fill="none" stroke="#fff" stroke-width="1.9" stroke-linecap="round" stroke-linejoin="round"><path d="M14.106 5.553a2 2 0 0 0 1.788 0l3.659-1.830A1 1 0 0 1 21 4.619v12.764a1 1 0 0 1-.553.894l-4.553 2.277a2 2 0 0 1-1.788 0l-4.212-2.106a2 2 0 0 0-1.788 0l-3.659 1.830A1 1 0 0 1 3 19.381V6.618a1 1 0 0 1 .553-.894l4.553-2.277a2 2 0 0 1 1.788 0z"/><path d="M15 5.764v15M9 3.236v15"/></svg><svg class="a" style="left:2513px;top:1180px" width="26" height="26" viewBox="0 0 24 24" fill="none" stroke="#fff" stroke-width="1.9" stroke-linecap="round" stroke-linejoin="round"><circle cx="18.500" cy="4.500" r="2.500"/><circle cx="5.500" cy="19.500" r="2.500"/><path d="M8 19.500h7.500a3 3 0 0 0 2.600-4.500M16 4.500H9a3.500 3.500 0 0 0-2.500 6M2.500 3.500l19 17.500"/><path d="M6.500 10.500q3 2 8 2.500"/></svg></body></html>
